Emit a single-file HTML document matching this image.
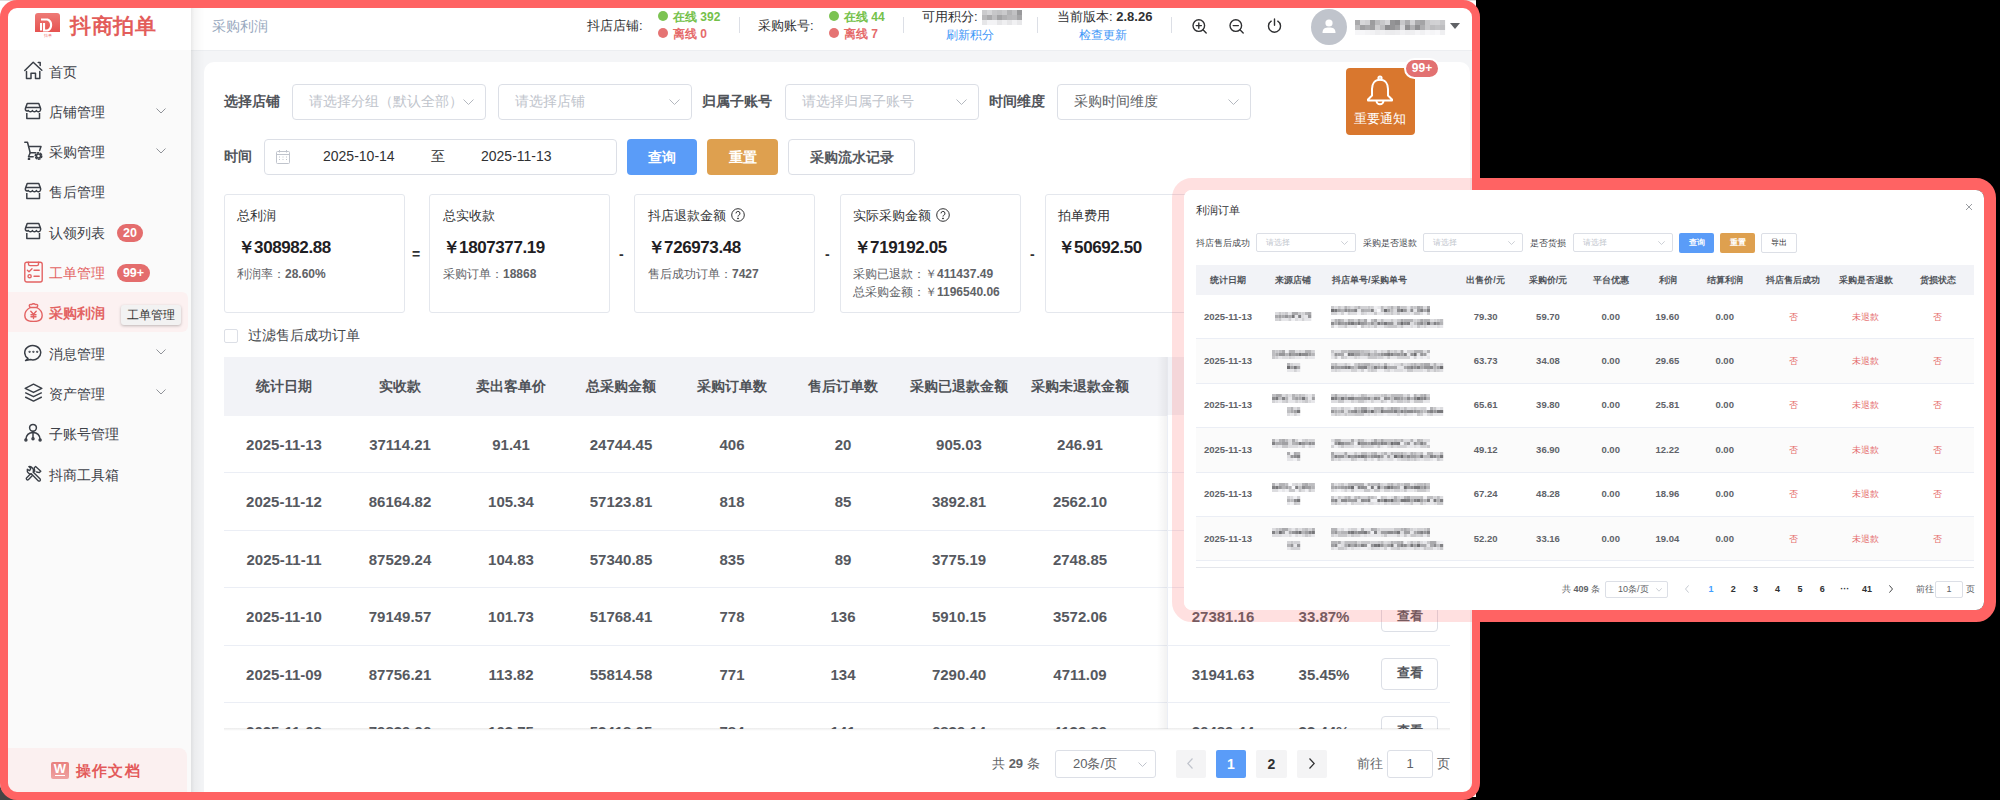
<!DOCTYPE html>
<html><head><meta charset="utf-8">
<style>
*{box-sizing:border-box;margin:0;padding:0}
html,body{width:2000px;height:800px;overflow:hidden;background:#000}
body{position:relative;font-family:"Liberation Sans",sans-serif;color:#606266}
.a{position:absolute;white-space:nowrap}
#under{position:absolute;left:0;top:0;width:1476px;height:797px;background:#fff;border-bottom-left-radius:14px;border-top:1px solid #ddd}
#app{position:absolute;left:0;top:0;width:1480px;height:800px;clip-path:inset(8px round 9px);background:#f4f5f7}
#frame{position:absolute;left:0;top:0;width:1480px;height:800px;border:8px solid #ff6363;border-radius:17px}
/* sidebar */
#side{position:absolute;left:8px;top:8px;width:183px;height:784px;background:#fafafa}
#logo{position:absolute;left:8px;top:8px;width:183px;height:42px;background:#fff}
#sideshadow{position:absolute;left:191px;top:8px;width:14px;height:784px;background:linear-gradient(to right,rgba(0,0,0,0.085),rgba(0,0,0,0.035) 25%,rgba(0,0,0,0.01) 70%,rgba(0,0,0,0))}
.mi{position:absolute;left:49px;font-size:14px;color:#3d4148;line-height:20px}
.ic{position:absolute;left:24px;width:19px;height:19px}
.chev{position:absolute;left:156px;width:10px;height:6px}
.badge{position:absolute;height:18px;border-radius:9px;background:#e46d6d;color:#fff;font-size:12.5px;font-weight:bold;line-height:18px;text-align:center}
/* header */
#hdr{position:absolute;left:191px;top:8px;width:1281px;height:43px;background:#fff;border-bottom:1px solid #eceef1}
.sep{position:absolute;width:1px;background:#dcdfe6}

.card{position:absolute;left:204px;top:62px;width:1266px;height:760px;background:#fff;border-radius:10px}
.lbl{position:absolute;font-size:14px;line-height:20px;color:#51545a;font-weight:bold}
.sel{position:absolute;height:36px;border:1px solid #dcdfe6;border-radius:4px;background:#fff}
.ph{position:absolute;font-size:14px;line-height:20px;color:#c0c4cc}
.btn{position:absolute;height:36px;border-radius:4px;font-size:14px;line-height:36px;text-align:center;font-weight:bold}
.sc{position:absolute;top:194px;width:181px;height:119px;border:1px solid #e4e7ed;border-radius:3px;background:#fff}
.st{position:absolute;font-size:13px;line-height:18px;color:#303133}
.sv{position:absolute;font-size:17px;line-height:20px;color:#1f2023;font-weight:bold;letter-spacing:-0.4px}
.ss{position:absolute;font-size:12px;line-height:16px;color:#606266}
.op{position:absolute;top:244px;font-size:14px;line-height:20px;color:#303133;font-weight:bold}

.th{position:absolute;top:376px;width:130px;margin-left:-65px;text-align:center;font-size:14px;line-height:20px;color:#4f5257;font-weight:bold}
.td{position:absolute;width:130px;margin-left:-65px;text-align:center;font-size:15px;line-height:20px;color:#56595f;font-weight:bold}
.rl{position:absolute;left:224px;width:1226px;height:1px;background:#ebeef5}
.vb{position:absolute;left:1381px;width:57px;height:31.5px;border:1px solid #dcdfe6;border-radius:4px;background:#fff;font-size:12.5px;line-height:29px;text-align:center;color:#55585e;font-weight:bold}
.pg{position:absolute;top:750px;width:30px;height:28px;border-radius:2px;background:#f4f4f5;font-size:14px;line-height:28px;text-align:center;color:#303133;font-weight:bold}

.ov{position:absolute;left:1172px;top:178px;width:824px;height:444px;border:12px solid #ff6363;border-radius:20px}
.ovl{font-size:9px;line-height:12px;color:#45484e}
.osel{position:absolute;top:233px;height:19px;border:1px solid #dcdfe6;border-radius:2px;background:#fff}
.oph{position:absolute;top:237px;font-size:8px;line-height:11px;color:#c0c4cc}
.oth{position:absolute;top:274px;width:80px;margin-left:-40px;text-align:center;font-size:9px;line-height:12px;color:#50535a;font-weight:bold}
.otd{position:absolute;width:80px;margin-left:-40px;text-align:center;font-size:9.5px;line-height:12px;color:#606369;font-weight:bold}
.ored{position:absolute;width:80px;margin-left:-40px;text-align:center;font-size:9px;line-height:12px;color:#e56b6b}
.orl{position:absolute;left:1196px;width:778px;height:1px;background:#ebeef5}
.opn{position:absolute;top:583px;width:20px;margin-left:-10px;text-align:center;font-size:9px;line-height:13px;color:#303133;font-weight:bold}
</style></head><body>
<div class="a" style="left:0;top:760px;width:40px;height:40px;background:#444"></div>
<div id="under"></div>
<div id="app">
  <div id="hdr"></div>
  <div class="a" style="left:212px;top:16px;font-size:14px;line-height:20px;color:#97a8be">采购利润</div>
  <div class="a" style="left:587px;top:16px;font-size:13px;line-height:20px;color:#303133">抖店店铺:</div>
  <div class="a" style="left:658px;top:11px;width:10px;height:10px;border-radius:5px;background:#7cc352"></div>
  <div class="a" style="left:673px;top:8px;font-size:12px;line-height:18px;color:#74c14a;font-weight:bold">在线 392</div>
  <div class="a" style="left:658px;top:28px;width:10px;height:10px;border-radius:5px;background:#e57373"></div>
  <div class="a" style="left:673px;top:25px;font-size:12px;line-height:18px;color:#e56b6b;font-weight:bold">离线 0</div>
  <div class="sep" style="left:739px;top:17px;height:16px"></div>
  <div class="a" style="left:758px;top:16px;font-size:13px;line-height:20px;color:#303133">采购账号:</div>
  <div class="a" style="left:829px;top:11px;width:10px;height:10px;border-radius:5px;background:#7cc352"></div>
  <div class="a" style="left:844px;top:8px;font-size:12px;line-height:18px;color:#74c14a;font-weight:bold">在线 44</div>
  <div class="a" style="left:829px;top:28px;width:10px;height:10px;border-radius:5px;background:#e57373"></div>
  <div class="a" style="left:844px;top:25px;font-size:12px;line-height:18px;color:#e56b6b;font-weight:bold">离线 7</div>
  <div class="sep" style="left:903px;top:17px;height:16px"></div>
  <div class="a" style="left:922px;top:7px;font-size:13px;line-height:20px;color:#303133">可用积分:</div>
  <svg class="a" style="left:982px;top:10px" width="40" height="15"><rect x="0" y="0" width="5.1" height="5" fill="rgb(203,203,205)"/><rect x="5" y="0" width="5.1" height="5" fill="rgb(214,214,216)"/><rect x="10" y="0" width="5.1" height="5" fill="rgb(199,199,201)"/><rect x="15" y="0" width="5.1" height="5" fill="rgb(194,194,196)"/><rect x="20" y="0" width="5.1" height="5" fill="rgb(202,202,204)"/><rect x="25" y="0" width="5.1" height="5" fill="rgb(179,179,181)"/><rect x="30" y="0" width="5.1" height="5" fill="rgb(193,193,195)"/><rect x="35" y="0" width="5.1" height="5" fill="rgb(153,153,155)"/><rect x="0" y="5" width="5.1" height="5" fill="rgb(185,185,187)"/><rect x="5" y="5" width="5.1" height="5" fill="rgb(170,170,172)"/><rect x="10" y="5" width="5.1" height="5" fill="rgb(191,191,193)"/><rect x="15" y="5" width="5.1" height="5" fill="rgb(163,163,165)"/><rect x="20" y="5" width="5.1" height="5" fill="rgb(177,177,179)"/><rect x="25" y="5" width="5.1" height="5" fill="rgb(184,184,186)"/><rect x="30" y="5" width="5.1" height="5" fill="rgb(186,186,188)"/><rect x="35" y="5" width="5.1" height="5" fill="rgb(165,165,167)"/><rect x="0" y="10" width="5.1" height="5" fill="rgb(230,230,232)"/><rect x="5" y="10" width="5.1" height="5" fill="rgb(243,243,245)"/><rect x="10" y="10" width="5.1" height="5" fill="rgb(243,243,245)"/><rect x="15" y="10" width="5.1" height="5" fill="rgb(230,230,232)"/><rect x="20" y="10" width="5.1" height="5" fill="rgb(239,239,241)"/><rect x="25" y="10" width="5.1" height="5" fill="rgb(230,230,232)"/><rect x="30" y="10" width="5.1" height="5" fill="rgb(241,241,243)"/><rect x="35" y="10" width="5.1" height="5" fill="rgb(232,232,234)"/></svg>
  <div class="a" style="left:946px;top:26px;font-size:12px;line-height:18px;color:#3f97f7">刷新积分</div>
  <div class="sep" style="left:1037px;top:17px;height:16px"></div>
  <div class="a" style="left:1057px;top:7px;font-size:13px;line-height:20px;color:#303133">当前版本: <b>2.8.26</b></div>
  <div class="a" style="left:1079px;top:25.5px;font-size:12px;line-height:18px;color:#3f97f7">检查更新</div>
  <div class="sep" style="left:1171px;top:17px;height:16px"></div>
  <svg class="a" style="left:1192px;top:19px" width="16" height="15" viewBox="0 0 16 15" fill="none" stroke="#303133" stroke-width="1.4" stroke-linecap="round"><circle cx="6.8" cy="6.6" r="5.8"/><path d="M11 10.8L14.2 14M4.2 6.6H9.4M6.8 4V9.2"/></svg>
  <svg class="a" style="left:1229px;top:19px" width="16" height="15" viewBox="0 0 16 15" fill="none" stroke="#303133" stroke-width="1.4" stroke-linecap="round"><circle cx="6.8" cy="6.6" r="5.8"/><path d="M11 10.8L14.2 14M4.2 6.6H9.4"/></svg>
  <svg class="a" style="left:1267px;top:18px" width="15" height="15" viewBox="0 0 15 15" fill="none" stroke="#303133" stroke-width="1.4" stroke-linecap="round"><path d="M4.2 3.2A6 6 0 1 0 10.8 3.2"/><path d="M7.5 1V7.2"/></svg>
  <div class="a" style="left:1311px;top:9px;width:36px;height:36px;border-radius:18px;background:#c0c4cc"></div>
  <svg class="a" style="left:1320px;top:17px" width="18" height="18" viewBox="0 0 18 18" fill="#fff"><circle cx="9" cy="6" r="3.6"/><path d="M2.5 16C2.5 11.5 5 10.4 9 10.4C13 10.4 15.5 11.5 15.5 16Z"/></svg>
  <svg class="a" style="left:1355px;top:20px" width="91" height="15"><rect x="0" y="0" width="5.1" height="5" fill="rgb(170,170,172)"/><rect x="5" y="0" width="5.1" height="5" fill="rgb(215,215,217)"/><rect x="10" y="0" width="5.1" height="5" fill="rgb(209,209,211)"/><rect x="15" y="0" width="5.1" height="5" fill="rgb(156,156,158)"/><rect x="20" y="0" width="5.1" height="5" fill="rgb(187,187,189)"/><rect x="25" y="0" width="5.1" height="5" fill="rgb(200,200,202)"/><rect x="30" y="0" width="5.1" height="5" fill="rgb(214,214,216)"/><rect x="35" y="0" width="5.1" height="5" fill="rgb(148,148,150)"/><rect x="40" y="0" width="5.1" height="5" fill="rgb(141,141,143)"/><rect x="45" y="0" width="5.1" height="5" fill="rgb(200,200,202)"/><rect x="50" y="0" width="5.1" height="5" fill="rgb(173,173,175)"/><rect x="55" y="0" width="5.1" height="5" fill="rgb(210,210,212)"/><rect x="60" y="0" width="5.1" height="5" fill="rgb(169,169,171)"/><rect x="65" y="0" width="5.1" height="5" fill="rgb(164,164,166)"/><rect x="70" y="0" width="5.1" height="5" fill="rgb(200,200,202)"/><rect x="75" y="0" width="5.1" height="5" fill="rgb(209,209,211)"/><rect x="80" y="0" width="5.1" height="5" fill="rgb(210,210,212)"/><rect x="85" y="0" width="5.1" height="5" fill="rgb(200,200,202)"/><rect x="0" y="5" width="5.1" height="5" fill="rgb(190,190,192)"/><rect x="5" y="5" width="5.1" height="5" fill="rgb(159,159,161)"/><rect x="10" y="5" width="5.1" height="5" fill="rgb(169,169,171)"/><rect x="15" y="5" width="5.1" height="5" fill="rgb(159,159,161)"/><rect x="20" y="5" width="5.1" height="5" fill="rgb(206,206,208)"/><rect x="25" y="5" width="5.1" height="5" fill="rgb(189,189,191)"/><rect x="30" y="5" width="5.1" height="5" fill="rgb(141,141,143)"/><rect x="35" y="5" width="5.1" height="5" fill="rgb(148,148,150)"/><rect x="40" y="5" width="5.1" height="5" fill="rgb(160,160,162)"/><rect x="45" y="5" width="5.1" height="5" fill="rgb(215,215,217)"/><rect x="50" y="5" width="5.1" height="5" fill="rgb(145,145,147)"/><rect x="55" y="5" width="5.1" height="5" fill="rgb(178,178,180)"/><rect x="60" y="5" width="5.1" height="5" fill="rgb(143,143,145)"/><rect x="65" y="5" width="5.1" height="5" fill="rgb(174,174,176)"/><rect x="70" y="5" width="5.1" height="5" fill="rgb(200,200,202)"/><rect x="75" y="5" width="5.1" height="5" fill="rgb(189,189,191)"/><rect x="80" y="5" width="5.1" height="5" fill="rgb(194,194,196)"/><rect x="85" y="5" width="5.1" height="5" fill="rgb(190,190,192)"/><rect x="0" y="10" width="5.1" height="5" fill="rgb(246,246,248)"/><rect x="5" y="10" width="5.1" height="5" fill="rgb(247,247,249)"/><rect x="10" y="10" width="5.1" height="5" fill="rgb(244,244,246)"/><rect x="15" y="10" width="5.1" height="5" fill="rgb(242,242,244)"/><rect x="20" y="10" width="5.1" height="5" fill="rgb(237,237,239)"/><rect x="25" y="10" width="5.1" height="5" fill="rgb(240,240,242)"/><rect x="30" y="10" width="5.1" height="5" fill="rgb(236,236,238)"/><rect x="35" y="10" width="5.1" height="5" fill="rgb(235,235,237)"/><rect x="40" y="10" width="5.1" height="5" fill="rgb(237,237,239)"/><rect x="45" y="10" width="5.1" height="5" fill="rgb(242,242,244)"/><rect x="50" y="10" width="5.1" height="5" fill="rgb(238,238,240)"/><rect x="55" y="10" width="5.1" height="5" fill="rgb(239,239,241)"/><rect x="60" y="10" width="5.1" height="5" fill="rgb(245,245,247)"/><rect x="65" y="10" width="5.1" height="5" fill="rgb(241,241,243)"/><rect x="70" y="10" width="5.1" height="5" fill="rgb(247,247,249)"/><rect x="75" y="10" width="5.1" height="5" fill="rgb(245,245,247)"/><rect x="80" y="10" width="5.1" height="5" fill="rgb(248,248,250)"/><rect x="85" y="10" width="5.1" height="5" fill="rgb(239,239,241)"/></svg>
  <svg class="a" style="left:1450px;top:23px" width="10" height="6" viewBox="0 0 10 6"><path d="M0 0H10L5 6Z" fill="#606266"/></svg>

  
  <div class="card"></div>
  <div class="lbl" style="left:224px;top:91px">选择店铺</div>
  <div class="sel" style="left:292px;top:84px;width:194px"></div>
  <div class="ph" style="left:309px;top:91px">请选择分组（默认全部）</div>
  <svg class="a" style="left:463px;top:99px" width="11" height="6" viewBox="0 0 11 6" fill="none" stroke="#b4b8bf" stroke-width="1"><path d="M0.5 0.5L5.5 5.5L10.5 0.5"/></svg>
  <div class="sel" style="left:498px;top:84px;width:194px"></div>
  <div class="ph" style="left:515px;top:91px">请选择店铺</div>
  <svg class="a" style="left:669px;top:99px" width="11" height="6" viewBox="0 0 11 6" fill="none" stroke="#b4b8bf" stroke-width="1"><path d="M0.5 0.5L5.5 5.5L10.5 0.5"/></svg>
  <div class="lbl" style="left:702px;top:91px">归属子账号</div>
  <div class="sel" style="left:785px;top:84px;width:194px"></div>
  <div class="ph" style="left:802px;top:91px">请选择归属子账号</div>
  <svg class="a" style="left:956px;top:99px" width="11" height="6" viewBox="0 0 11 6" fill="none" stroke="#b4b8bf" stroke-width="1"><path d="M0.5 0.5L5.5 5.5L10.5 0.5"/></svg>
  <div class="lbl" style="left:989px;top:91px">时间维度</div>
  <div class="sel" style="left:1057px;top:84px;width:194px"></div>
  <div class="ph" style="left:1074px;top:91px;color:#606266">采购时间维度</div>
  <svg class="a" style="left:1228px;top:99px" width="11" height="6" viewBox="0 0 11 6" fill="none" stroke="#b4b8bf" stroke-width="1"><path d="M0.5 0.5L5.5 5.5L10.5 0.5"/></svg>
  <div class="lbl" style="left:224px;top:146px">时间</div>
  <div class="sel" style="left:264px;top:139px;width:353px"></div>
  <svg class="a" style="left:276px;top:150px" width="14" height="14" viewBox="0 0 14 14" fill="none" stroke="#c0c4cc" stroke-width="1"><rect x="0.5" y="1.5" width="13" height="12" rx="1"/><path d="M0.5 4.5H13.5M3.5 0V2.5M10.5 0V2.5"/><path d="M3 7H4M6.5 7H7.5M10 7H11M3 9.5H4M6.5 9.5H7.5M10 9.5H11"/></svg>
  <div class="a" style="left:323px;top:146px;font-size:14px;line-height:20px;color:#303133">2025-10-14</div>
  <div class="a" style="left:431px;top:146px;font-size:14px;line-height:20px;color:#303133">至</div>
  <div class="a" style="left:481px;top:146px;font-size:14px;line-height:20px;color:#303133">2025-11-13</div>
  <div class="btn" style="left:627px;top:139px;width:70px;background:#5a9cf8;color:#fff">查询</div>
  <div class="btn" style="left:707px;top:139px;width:71px;background:#dea04f;color:#fff">重置</div>
  <div class="btn" style="left:788px;top:139px;width:127px;border:1px solid #dcdfe6;background:#fff;color:#55585e;line-height:34px">采购流水记录</div>
  <!-- notify -->
  <div class="a" style="left:1346px;top:68px;width:69px;height:67px;border-radius:4px;background:#d9772e"></div>
  <svg class="a" style="left:1366px;top:75px" width="28" height="31" viewBox="0 0 28 31" fill="none" stroke="#fff" stroke-width="2" stroke-linejoin="round"><circle cx="14" cy="3" r="1.6"/><path d="M14 4.8C8.5 4.8 6 9 6 14V20.5L2 24.5V25.5H26V24.5L22 20.5V14C22 9 19.5 4.8 14 4.8Z"/><path d="M10.5 25.8A3.5 3.5 0 0 0 17.5 25.8"/></svg>
  <div class="a" style="left:1354px;top:109px;font-size:13px;line-height:20px;color:#fff">重要通知</div>
  <div class="a" style="left:1404px;top:58px;width:36px;height:21px;border-radius:11px;background:#e27171;border:2px solid #fff;color:#fff;font-size:12px;font-weight:bold;line-height:17px;text-align:center">99+</div>

  <div class="sc" style="left:224px"></div>
  <div class="st" style="left:237px;top:207px">总利润</div>
  <div class="sv" style="left:237.5px;top:238px">￥308982.88</div>
  <div class="ss" style="left:237px;top:266px">利润率：<b>28.60%</b></div>
  <div class="op" style="left:412px">=</div>
  <div class="sc" style="left:429px"></div>
  <div class="st" style="left:443px;top:207px">总实收款</div>
  <div class="sv" style="left:442.5px;top:238px">￥1807377.19</div>
  <div class="ss" style="left:443px;top:266px">采购订单：<b>18868</b></div>
  <div class="op" style="left:619px">-</div>
  <div class="sc" style="left:634px"></div>
  <div class="st" style="left:648px;top:207px">抖店退款金额</div>
  <svg class="a" style="left:731px;top:208px" width="14" height="14" viewBox="0 0 14 14" fill="none" stroke="#303133" stroke-width="1"><circle cx="7" cy="7" r="6.3"/><path d="M5 5.4A2 2 0 1 1 7.6 7.3C7.1 7.6 7 8 7 8.6"/><circle cx="7" cy="10.4" r="0.5" fill="#303133"/></svg>
  <div class="sv" style="left:647.5px;top:238px">￥726973.48</div>
  <div class="ss" style="left:648px;top:266px">售后成功订单：<b>7427</b></div>
  <div class="op" style="left:825px">-</div>
  <div class="sc" style="left:840px"></div>
  <div class="st" style="left:853px;top:207px">实际采购金额</div>
  <svg class="a" style="left:936px;top:208px" width="14" height="14" viewBox="0 0 14 14" fill="none" stroke="#303133" stroke-width="1"><circle cx="7" cy="7" r="6.3"/><path d="M5 5.4A2 2 0 1 1 7.6 7.3C7.1 7.6 7 8 7 8.6"/><circle cx="7" cy="10.4" r="0.5" fill="#303133"/></svg>
  <div class="sv" style="left:853.5px;top:238px">￥719192.05</div>
  <div class="ss" style="left:853px;top:266px">采购已退款：￥<b>411437.49</b></div>
  <div class="ss" style="left:853px;top:284px">总采购金额：￥<b>1196540.06</b></div>
  <div class="op" style="left:1030px">-</div>
  <div class="sc" style="left:1045px"></div>
  <div class="st" style="left:1058px;top:207px">拍单费用</div>
  <div class="sv" style="left:1057.5px;top:238px">￥50692.50</div>
  <div class="a" style="left:224px;top:329px;width:14px;height:14px;border:1px solid #dcdfe6;border-radius:2px;background:#fff"></div>
  <div class="a" style="left:248px;top:325px;font-size:14px;line-height:20px;color:#45484d">过滤售后成功订单</div>


  <div class="a" style="left:224px;top:357px;width:1226px;height:58.5px;background:#f2f3f7"></div>
  <div class="a" style="left:1157px;top:357px;width:10px;height:58px;background:linear-gradient(to right,rgba(0,0,0,0),rgba(0,0,0,0.05))"></div>
  <div class="a" style="left:1167px;top:357px;width:1px;height:58px;background:#e6e8ee"></div>
  <div class="th" style="left:284px">统计日期</div>
  <div class="th" style="left:400px">实收款</div>
  <div class="th" style="left:511px">卖出客单价</div>
  <div class="th" style="left:621px">总采购金额</div>
  <div class="th" style="left:732px">采购订单数</div>
  <div class="th" style="left:843px">售后订单数</div>
  <div class="th" style="left:959px">采购已退款金额</div>
  <div class="th" style="left:1080px">采购未退款金额</div>
  <div class="a" style="left:224px;top:415px;width:1246px;height:314px;overflow:hidden">
    <div class="td" style="left:60px;top:19.5px">2025-11-13</div>
    <div class="td" style="left:176px;top:19.5px">37114.21</div>
    <div class="td" style="left:287px;top:19.5px">91.41</div>
    <div class="td" style="left:397px;top:19.5px">24744.45</div>
    <div class="td" style="left:508px;top:19.5px">406</div>
    <div class="td" style="left:619px;top:19.5px">20</div>
    <div class="td" style="left:735px;top:19.5px">905.03</div>
    <div class="td" style="left:856px;top:19.5px">246.91</div>
    <div class="rl" style="left:0;top:57.0px"></div>
    <div class="td" style="left:60px;top:77.0px">2025-11-12</div>
    <div class="td" style="left:176px;top:77.0px">86164.82</div>
    <div class="td" style="left:287px;top:77.0px">105.34</div>
    <div class="td" style="left:397px;top:77.0px">57123.81</div>
    <div class="td" style="left:508px;top:77.0px">818</div>
    <div class="td" style="left:619px;top:77.0px">85</div>
    <div class="td" style="left:735px;top:77.0px">3892.81</div>
    <div class="td" style="left:856px;top:77.0px">2562.10</div>
    <div class="rl" style="left:0;top:114.5px"></div>
    <div class="td" style="left:60px;top:134.5px">2025-11-11</div>
    <div class="td" style="left:176px;top:134.5px">87529.24</div>
    <div class="td" style="left:287px;top:134.5px">104.83</div>
    <div class="td" style="left:397px;top:134.5px">57340.85</div>
    <div class="td" style="left:508px;top:134.5px">835</div>
    <div class="td" style="left:619px;top:134.5px">89</div>
    <div class="td" style="left:735px;top:134.5px">3775.19</div>
    <div class="td" style="left:856px;top:134.5px">2748.85</div>
    <div class="rl" style="left:0;top:172.0px"></div>
    <div class="td" style="left:60px;top:192.0px">2025-11-10</div>
    <div class="td" style="left:176px;top:192.0px">79149.57</div>
    <div class="td" style="left:287px;top:192.0px">101.73</div>
    <div class="td" style="left:397px;top:192.0px">51768.41</div>
    <div class="td" style="left:508px;top:192.0px">778</div>
    <div class="td" style="left:619px;top:192.0px">136</div>
    <div class="td" style="left:735px;top:192.0px">5910.15</div>
    <div class="td" style="left:856px;top:192.0px">3572.06</div>
    <div class="rl" style="left:0;top:229.5px"></div>
    <div class="td" style="left:60px;top:249.5px">2025-11-09</div>
    <div class="td" style="left:176px;top:249.5px">87756.21</div>
    <div class="td" style="left:287px;top:249.5px">113.82</div>
    <div class="td" style="left:397px;top:249.5px">55814.58</div>
    <div class="td" style="left:508px;top:249.5px">771</div>
    <div class="td" style="left:619px;top:249.5px">134</div>
    <div class="td" style="left:735px;top:249.5px">7290.40</div>
    <div class="td" style="left:856px;top:249.5px">4711.09</div>
    <div class="rl" style="left:0;top:287.0px"></div>
    <div class="td" style="left:60px;top:307.0px">2025-11-08</div>
    <div class="td" style="left:176px;top:307.0px">79839.96</div>
    <div class="td" style="left:287px;top:307.0px">103.75</div>
    <div class="td" style="left:397px;top:307.0px">52418.05</div>
    <div class="td" style="left:508px;top:307.0px">784</div>
    <div class="td" style="left:619px;top:307.0px">141</div>
    <div class="td" style="left:735px;top:307.0px">6839.14</div>
    <div class="td" style="left:856px;top:307.0px">4139.89</div>
    <div class="rl" style="left:0;top:344.5px"></div>
    <div class="a" style="left:933px;top:0;width:10px;height:314px;background:linear-gradient(to right,rgba(0,0,0,0),rgba(0,0,0,0.05))"></div>
    <div class="a" style="left:943px;top:0;width:283px;height:314px;background:#fff;border-left:1px solid #ebeef5"></div>
    <div class="td" style="left:999px;top:19.5px">24396.06</div>
    <div class="td" style="left:1100px;top:19.5px">32.42%</div>
    <div class="vb" style="left:1157px;top:13.0px">查看</div>
    <div class="rl" style="left:943px;width:283px;top:57.0px"></div>
    <div class="td" style="left:999px;top:77.0px">28148.91</div>
    <div class="td" style="left:1100px;top:77.0px">32.67%</div>
    <div class="vb" style="left:1157px;top:70.5px">查看</div>
    <div class="rl" style="left:943px;width:283px;top:114.5px"></div>
    <div class="td" style="left:999px;top:134.5px">29067.78</div>
    <div class="td" style="left:1100px;top:134.5px">33.21%</div>
    <div class="vb" style="left:1157px;top:128.0px">查看</div>
    <div class="rl" style="left:943px;width:283px;top:172.0px"></div>
    <div class="td" style="left:999px;top:192.0px">27381.16</div>
    <div class="td" style="left:1100px;top:192.0px">33.87%</div>
    <div class="vb" style="left:1157px;top:185.5px">查看</div>
    <div class="rl" style="left:943px;width:283px;top:229.5px"></div>
    <div class="td" style="left:999px;top:249.5px">31941.63</div>
    <div class="td" style="left:1100px;top:249.5px">35.45%</div>
    <div class="vb" style="left:1157px;top:243.0px">查看</div>
    <div class="rl" style="left:943px;width:283px;top:287.0px"></div>
    <div class="td" style="left:999px;top:307.0px">26489.44</div>
    <div class="td" style="left:1100px;top:307.0px">33.44%</div>
    <div class="vb" style="left:1157px;top:300.5px">查看</div>
    <div class="rl" style="left:943px;width:283px;top:344.5px"></div>
  </div>
  <div class="a" style="left:224px;top:728px;width:1226px;height:3px;background:linear-gradient(rgba(0,0,0,0.08),rgba(0,0,0,0))"></div>

  <div class="a" style="left:992px;top:754px;font-size:13px;line-height:20px;color:#606266">共 <b>29</b> 条</div>
  <div class="sel" style="left:1055px;top:750px;width:101px;height:28px;border-radius:3px"></div>
  <div class="a" style="left:1073px;top:754px;font-size:13px;line-height:20px;color:#606266">20条/页</div>
  <svg class="a" style="left:1138px;top:762px" width="9" height="5" viewBox="0 0 9 5" fill="none" stroke="#c0c4cc" stroke-width="1"><path d="M0.5 0.5L4.5 4.5L8.5 0.5"/></svg>
  <div class="pg" style="left:1176px"></div>
  <svg class="a" style="left:1187px;top:758px" width="6" height="11" viewBox="0 0 6 11" fill="none" stroke="#c0c4cc" stroke-width="1.2"><path d="M5.5 0.5L0.8 5.5L5.5 10.5"/></svg>
  <div class="pg" style="left:1216px;background:#5a9cf8;color:#fff">1</div>
  <div class="pg" style="left:1256px;width:31px">2</div>
  <div class="pg" style="left:1297px"></div>
  <svg class="a" style="left:1309px;top:758px" width="6" height="11" viewBox="0 0 6 11" fill="none" stroke="#303133" stroke-width="1.2"><path d="M0.5 0.5L5.2 5.5L0.5 10.5"/></svg>
  <div class="a" style="left:1357px;top:754px;font-size:13px;line-height:20px;color:#606266">前往</div>
  <div class="sel" style="left:1387px;top:750px;width:46px;height:28px;border-radius:3px"></div>
  <div class="a" style="left:1387px;top:754px;width:46px;text-align:center;font-size:13px;line-height:20px;color:#606266">1</div>
  <div class="a" style="left:1437px;top:754px;font-size:13px;line-height:20px;color:#606266">页</div>

  <div id="side"></div>
  <div id="logo"></div>
  
  <!-- logo -->
  <svg class="a" style="left:34px;top:12px" width="27" height="26" viewBox="0 0 27 26">
    <defs><linearGradient id="lg" x1="0" y1="0" x2="0" y2="1"><stop offset="0" stop-color="#ee7a76"/><stop offset="1" stop-color="#e65350"/></linearGradient></defs>
    <path d="M4 1H23a3 3 0 0 1 3 3V20H1V4a3 3 0 0 1 3-3z" fill="url(#lg)"/>
    <path d="M7 7.5h6.5a6 6 0 0 1 0 11H10V11" fill="none" stroke="#fff" stroke-width="2.2"/>
    <path d="M7 11v7.5" stroke="#fff" stroke-width="2"/>
    <text x="13.5" y="25" font-size="4" fill="#e66" text-anchor="middle">抖单</text>
  </svg>
  <div class="a" style="left:70px;top:13px;font-size:21px;line-height:26px;color:#e35d5b;font-weight:bold;letter-spacing:0.6px">抖商拍单</div>
  <!-- menu -->
  <svg class="ic" style="top:61px" viewBox="0 0 19 19" fill="none" stroke="#3a3f47" stroke-width="1.5" stroke-linecap="round" stroke-linejoin="round">
    <path d="M0.8 9.5L9.2 1.2L17.8 9.3"/><path d="M14.2 1.6h2v2.8"/><path d="M2.5 10.4V17.6H7V12.2H11.5V17.6H15.8V10.4"/></svg>
  <div class="mi" style="top:61.5px">首页</div>
  <svg class="ic" style="top:102px" viewBox="0 0 19 19" fill="none" stroke="#3a3f47" stroke-width="1.5" stroke-linejoin="round">
    <path d="M3.2 1.5H14.8L16.6 6.5V7.8A2.2 2.2 0 0 1 12.4 8.5A2.2 2.2 0 0 1 8.4 8.5A2.2 2.2 0 0 1 4.4 8.5A2.2 2.2 0 0 1 1.4 7.8V6.5Z"/><path d="M1.5 5.5H16.5"/><path d="M2.8 11V16.5H15.5V11"/></svg>
  <div class="mi" style="top:101.8px">店铺管理</div>
  <svg class="chev" style="top:108px" viewBox="0 0 10 6" fill="none" stroke="#909399" stroke-width="1"><path d="M0.5 0.5L5 5L9.5 0.5"/></svg>
  <svg class="ic" style="top:141px" viewBox="0 0 19 19" fill="none" stroke="#3a3f47" stroke-width="1.5" stroke-linecap="round" stroke-linejoin="round">
    <path d="M0.8 1.2H3.5L6.2 11.8H11.5"/><path d="M4.8 5.5H17L15.6 9.5"/><path d="M6.2 11.8L4.5 15.8H9.2"/><circle cx="5" cy="18" r="0.6" fill="#3a3f47"/>
    <circle cx="14.5" cy="15" r="2"/><circle cx="14.5" cy="15" r="3.2" stroke-width="1.6" stroke-dasharray="1.4 1.95"/></svg>
  <div class="mi" style="top:142.1px">采购管理</div>
  <svg class="chev" style="top:148px" viewBox="0 0 10 6" fill="none" stroke="#909399" stroke-width="1"><path d="M0.5 0.5L5 5L9.5 0.5"/></svg>
  <svg class="ic" style="top:182px" viewBox="0 0 19 19" fill="none" stroke="#3a3f47" stroke-width="1.5" stroke-linejoin="round">
    <path d="M3.2 1.5H14.8L16.6 6.5V7.8A2.2 2.2 0 0 1 12.4 8.5A2.2 2.2 0 0 1 8.4 8.5A2.2 2.2 0 0 1 4.4 8.5A2.2 2.2 0 0 1 1.4 7.8V6.5Z"/><path d="M1.5 5.5H16.5"/><path d="M2.8 11V16.5H15.5V11"/></svg>
  <div class="mi" style="top:182.4px">售后管理</div>
  <svg class="ic" style="top:222px" viewBox="0 0 19 19" fill="none" stroke="#3a3f47" stroke-width="1.5" stroke-linejoin="round">
    <path d="M3.2 1.5H14.8L16.6 6.5V7.8A2.2 2.2 0 0 1 12.4 8.5A2.2 2.2 0 0 1 8.4 8.5A2.2 2.2 0 0 1 4.4 8.5A2.2 2.2 0 0 1 1.4 7.8V6.5Z"/><path d="M1.5 5.5H16.5"/><path d="M2.8 11V16.5H15.5V11"/></svg>
  <div class="mi" style="top:222.7px">认领列表</div>
  <div class="badge" style="left:117px;top:224px;width:26px">20</div>
  <svg class="ic" style="top:261px;height:22px" viewBox="0 0 19 22" fill="none" stroke="#e36363" stroke-width="1.4" stroke-linecap="round" stroke-linejoin="round">
    <rect x="0.8" y="1.2" width="17.4" height="19.8" rx="2"/><path d="M4.5 1.2V3.2A1.5 1.5 0 0 0 6 4.6H13A1.5 1.5 0 0 0 14.5 3.2V1.2"/>
    <path d="M3.4 9.3L5 10.8L8 7.8"/><path d="M10 9.3H15.2"/><circle cx="5.6" cy="15.2" r="1.6"/><path d="M10 15.2H15.2"/></svg>
  <div class="mi" style="top:263.0px;color:#e36363">工单管理</div>
  <div class="badge" style="left:117px;top:264px;width:33px">99+</div>
  <div class="a" style="left:8px;top:292px;width:180px;height:40px;background:#fcf1f1;border-radius:0 6px 6px 0"></div>
  <svg class="ic" style="top:303px" viewBox="0 0 19 19" fill="none" stroke="#e36363" stroke-width="1.4" stroke-linecap="round" stroke-linejoin="round">
    <path d="M6.2 4.5C4.5 2.8 5.5 0.8 7.4 1.6C8.5 0.6 10.5 0.6 11.6 1.6C13.5 0.8 14.5 2.8 12.8 4.5"/>
    <path d="M6.2 4.5C2.5 6.5 0.8 9.5 0.8 12.5C0.8 16.5 4.5 18.5 9.5 18.5C14.5 18.5 18.2 16.5 18.2 12.5C18.2 9.5 16.5 6.5 12.8 4.5Z"/>
    <path d="M6.8 8.2L9.5 11.2L12.2 8.2M9.5 11.2V15.5M7 11.8H12M7 13.8H12"/></svg>
  <div class="mi" style="top:303.3px;color:#e36363;font-weight:bold">采购利润</div>
  <div class="a" style="left:121px;top:305px;width:60px;height:20px;background:#f2f2f2;border-radius:3px;box-shadow:0 1px 3px rgba(0,0,0,0.25);font-size:12px;line-height:20px;color:#333;text-align:center">工单管理</div>
  <svg class="ic" style="top:343px" viewBox="0 0 19 19" fill="none" stroke="#3a3f47" stroke-width="1.5" stroke-linecap="round" stroke-linejoin="round">
    <path d="M4 15.5A8 7.2 0 1 1 6.5 16.6L1.6 17.6Z"/><circle cx="5.6" cy="8.8" r="0.4" fill="#3a3f47"/><circle cx="9.4" cy="8.8" r="0.4" fill="#3a3f47"/><circle cx="13.2" cy="8.8" r="0.4" fill="#3a3f47"/></svg>
  <div class="mi" style="top:343.6px">消息管理</div>
  <svg class="chev" style="top:349px" viewBox="0 0 10 6" fill="none" stroke="#909399" stroke-width="1"><path d="M0.5 0.5L5 5L9.5 0.5"/></svg>
  <svg class="ic" style="top:383px;height:20px" viewBox="0 0 19 20" fill="none" stroke="#3a3f47" stroke-width="1.5" stroke-linejoin="round">
    <path d="M9.5 1.2L17.8 5.3L9.5 9.4L1.2 5.3Z"/><path d="M1.2 9.6L9.5 13.7L17.8 9.6"/><path d="M1.2 14L9.5 18.1L17.8 14"/></svg>
  <div class="mi" style="top:383.9px">资产管理</div>
  <svg class="chev" style="top:389px" viewBox="0 0 10 6" fill="none" stroke="#909399" stroke-width="1"><path d="M0.5 0.5L5 5L9.5 0.5"/></svg>
  <svg class="ic" style="top:423px" viewBox="0 0 19 19" fill="none" stroke="#3a3f47" stroke-width="1.5" stroke-linecap="round">
    <circle cx="9" cy="4.8" r="3.4"/><path d="M9 8.2V14.8"/><path d="M1.8 16.8C2.2 12.2 5 9.6 9 9.6C13 9.6 15.8 12.2 16.2 16.8"/><circle cx="1.9" cy="17" r="1"/><circle cx="9" cy="15.8" r="1"/><circle cx="16.1" cy="17" r="1"/></svg>
  <div class="mi" style="top:424.2px">子账号管理</div>
  <svg class="ic" style="top:464px" viewBox="0 0 19 19" fill="none" stroke="#3a3f47" stroke-width="1.35" stroke-linejoin="round" stroke-linecap="round">
    <path d="M9.3 8.2L16.2 15.1A1.3 1.3 0 0 1 14.4 16.9L7.5 10"/><path d="M9.3 8.2C9.8 6.4 9.4 4.8 8 3.6C7 2.7 5.8 2.4 4.8 2.6L6.8 4.6L5.6 6.6L3.3 5.3C3 6.7 3.4 8 4.4 8.9C5.2 9.7 6.3 10.1 7.5 10"/>
    <path d="M8.2 11.8L4.3 15.7A1.3 1.3 0 0 1 2.5 13.9L6.4 10"/><path d="M10.8 7.6L10.2 3.9L11.6 2.4L16.8 7.2L15.4 8.6L12.6 8"/></svg>
  <div class="mi" style="top:464.5px">抖商工具箱</div>
  <!-- docs -->
  <div class="a" style="left:8px;top:748px;width:179px;height:50px;background:#fbf0f0;border-radius:0 8px 0 0"></div>
  <div class="a" style="left:51px;top:762px;width:18px;height:17px;border-radius:2px;background:linear-gradient(#e8807e,#efa3a2)"></div>
  <div class="a" style="left:51px;top:761px;width:18px;font-size:13px;line-height:16px;color:#fff;text-align:center;font-weight:bold">W</div>
  <div class="a" style="left:55px;top:775px;width:10px;height:1px;background:#fff"></div>
  <div class="a" style="left:76px;top:761px;font-size:15px;line-height:20px;color:#e35a5a;font-weight:bold;letter-spacing:1.2px">操作文档</div>

  <div id="sideshadow"></div>
</div>
<div id="frame"></div>

<!-- overlay -->
<div class="ov" style="clip-path:inset(0 0 0 300px)"></div>
<div class="ov" style="border-color:rgba(255,99,99,0.2);clip-path:inset(0 524px 0 0)"></div>
<div class="a" style="left:1184px;top:190px;width:800px;height:420px;background:#fff;border-radius:8px"></div>
<div class="a" style="left:1196px;top:202px;font-size:11px;line-height:16px;color:#303133">利润订单</div>
<svg class="a" style="left:1965px;top:203px" width="8" height="8" viewBox="0 0 8 8" stroke="#909399" stroke-width="0.9"><path d="M1 1L7 7M7 1L1 7"/></svg>
<div class="a ovl" style="left:1196px;top:237px">抖店售后成功</div>
<div class="osel" style="left:1256px;width:100px"></div>
<div class="oph" style="left:1266px">请选择</div>
<div class="a ovl" style="left:1363px;top:237px">采购是否退款</div>
<div class="osel" style="left:1423px;width:100px"></div>
<div class="oph" style="left:1433px">请选择</div>
<div class="a ovl" style="left:1530px;top:237px">是否货损</div>
<div class="osel" style="left:1573px;width:100px"></div>
<div class="oph" style="left:1583px">请选择</div>
<svg class="a" style="left:1341px;top:241px" width="7" height="4" viewBox="0 0 7 4" fill="none" stroke="#c0c4cc" stroke-width="0.8"><path d="M0.3 0.3L3.5 3.5L6.7 0.3"/></svg>
<svg class="a" style="left:1508px;top:241px" width="7" height="4" viewBox="0 0 7 4" fill="none" stroke="#c0c4cc" stroke-width="0.8"><path d="M0.3 0.3L3.5 3.5L6.7 0.3"/></svg>
<svg class="a" style="left:1658px;top:241px" width="7" height="4" viewBox="0 0 7 4" fill="none" stroke="#c0c4cc" stroke-width="0.8"><path d="M0.3 0.3L3.5 3.5L6.7 0.3"/></svg>
<div class="a" style="left:1679px;top:233px;width:35px;height:20px;border-radius:2px;background:#5a9cf8;color:#fff;font-size:8px;line-height:20px;text-align:center;font-weight:bold">查询</div>
<div class="a" style="left:1720px;top:233px;width:35px;height:20px;border-radius:2px;background:#dea04f;color:#fff;font-size:8px;line-height:20px;text-align:center;font-weight:bold">重置</div>
<div class="a" style="left:1761px;top:233px;width:36px;height:20px;border-radius:2px;border:1px solid #dcdfe6;background:#fff;color:#303133;font-size:8px;line-height:18px;text-align:center">导出</div>
<div class="a" style="left:1196px;top:265px;width:778px;height:30px;background:#f2f3f7"></div>
<div class="oth" style="left:1228.0px">统计日期</div>
<div class="oth" style="left:1293.0px">来源店铺</div>
<div class="oth" style="left:1485.5px">出售价/元</div>
<div class="oth" style="left:1548.0px">采购价/元</div>
<div class="oth" style="left:1611.0px">平台优惠</div>
<div class="oth" style="left:1667.5px">利润</div>
<div class="oth" style="left:1725.0px">结算利润</div>
<div class="oth" style="left:1793.0px">抖店售后成功</div>
<div class="oth" style="left:1865.5px">采购是否退款</div>
<div class="oth" style="left:1937.7px">货损状态</div>
<div class="a" style="left:1332px;top:274px;font-size:9px;line-height:12px;color:#50535a;font-weight:bold">抖店单号/采购单号</div>
<div class="a" style="left:1196px;top:339.4px;width:778px;height:44.4px;background:#fbfbfb"></div>
<div class="a" style="left:1196px;top:428.2px;width:778px;height:44.4px;background:#fbfbfb"></div>
<div class="a" style="left:1196px;top:517.0px;width:778px;height:44.4px;background:#fbfbfb"></div>
<div class="otd" style="left:1228px;top:310.5px">2025-11-13</div>
<div class="otd" style="left:1485.6px;top:310.5px">79.30</div>
<div class="otd" style="left:1548.0px;top:310.5px">59.70</div>
<div class="otd" style="left:1610.7px;top:310.5px">0.00</div>
<div class="otd" style="left:1667.4px;top:310.5px">19.60</div>
<div class="otd" style="left:1724.7px;top:310.5px">0.00</div>
<div class="ored" style="left:1793.0px;top:310.5px">否</div>
<div class="ored" style="left:1865.5px;top:310.5px">未退款</div>
<div class="ored" style="left:1937.7px;top:310.5px">否</div>
<div class="orl" style="top:338.4px"></div>
<div class="otd" style="left:1228px;top:354.9px">2025-11-13</div>
<div class="otd" style="left:1485.6px;top:354.9px">63.73</div>
<div class="otd" style="left:1548.0px;top:354.9px">34.08</div>
<div class="otd" style="left:1610.7px;top:354.9px">0.00</div>
<div class="otd" style="left:1667.4px;top:354.9px">29.65</div>
<div class="otd" style="left:1724.7px;top:354.9px">0.00</div>
<div class="ored" style="left:1793.0px;top:354.9px">否</div>
<div class="ored" style="left:1865.5px;top:354.9px">未退款</div>
<div class="ored" style="left:1937.7px;top:354.9px">否</div>
<div class="orl" style="top:382.8px"></div>
<div class="otd" style="left:1228px;top:399.3px">2025-11-13</div>
<div class="otd" style="left:1485.6px;top:399.3px">65.61</div>
<div class="otd" style="left:1548.0px;top:399.3px">39.80</div>
<div class="otd" style="left:1610.7px;top:399.3px">0.00</div>
<div class="otd" style="left:1667.4px;top:399.3px">25.81</div>
<div class="otd" style="left:1724.7px;top:399.3px">0.00</div>
<div class="ored" style="left:1793.0px;top:399.3px">否</div>
<div class="ored" style="left:1865.5px;top:399.3px">未退款</div>
<div class="ored" style="left:1937.7px;top:399.3px">否</div>
<div class="orl" style="top:427.2px"></div>
<div class="otd" style="left:1228px;top:443.7px">2025-11-13</div>
<div class="otd" style="left:1485.6px;top:443.7px">49.12</div>
<div class="otd" style="left:1548.0px;top:443.7px">36.90</div>
<div class="otd" style="left:1610.7px;top:443.7px">0.00</div>
<div class="otd" style="left:1667.4px;top:443.7px">12.22</div>
<div class="otd" style="left:1724.7px;top:443.7px">0.00</div>
<div class="ored" style="left:1793.0px;top:443.7px">否</div>
<div class="ored" style="left:1865.5px;top:443.7px">未退款</div>
<div class="ored" style="left:1937.7px;top:443.7px">否</div>
<div class="orl" style="top:471.6px"></div>
<div class="otd" style="left:1228px;top:488.1px">2025-11-13</div>
<div class="otd" style="left:1485.6px;top:488.1px">67.24</div>
<div class="otd" style="left:1548.0px;top:488.1px">48.28</div>
<div class="otd" style="left:1610.7px;top:488.1px">0.00</div>
<div class="otd" style="left:1667.4px;top:488.1px">18.96</div>
<div class="otd" style="left:1724.7px;top:488.1px">0.00</div>
<div class="ored" style="left:1793.0px;top:488.1px">否</div>
<div class="ored" style="left:1865.5px;top:488.1px">未退款</div>
<div class="ored" style="left:1937.7px;top:488.1px">否</div>
<div class="orl" style="top:516.0px"></div>
<div class="otd" style="left:1228px;top:532.5px">2025-11-13</div>
<div class="otd" style="left:1485.6px;top:532.5px">52.20</div>
<div class="otd" style="left:1548.0px;top:532.5px">33.16</div>
<div class="otd" style="left:1610.7px;top:532.5px">0.00</div>
<div class="otd" style="left:1667.4px;top:532.5px">19.04</div>
<div class="otd" style="left:1724.7px;top:532.5px">0.00</div>
<div class="ored" style="left:1793.0px;top:532.5px">否</div>
<div class="ored" style="left:1865.5px;top:532.5px">未退款</div>
<div class="ored" style="left:1937.7px;top:532.5px">否</div>
<div class="orl" style="top:560.4px"></div>
<svg class="a" style="left:0;top:0;filter:blur(0.45px)" width="2000" height="800"><path fill="rgb(110,110,113)" d="M1331.0 309h3.3v3h-3.3zM1383.8 309h3.3v3h-3.3zM1400.3 309h3.3v3h-3.3zM1400.3 322h3.3v3h-3.3zM1426.7 322h3.3v3h-3.3zM1413.5 353h3.3v3h-3.3zM1439.9 366h3.3v3h-3.3zM1287.0 366h3.3v3h-3.3zM1416.8 397h3.3v3h-3.3zM1370.6 410h3.3v3h-3.3zM1390.4 442h3.3v3h-3.3zM1393.7 455h3.3v3h-3.3zM1400.3 455h3.3v3h-3.3zM1350.8 486h3.3v3h-3.3zM1377.2 486h3.3v3h-3.3zM1387.1 486h3.3v3h-3.3zM1403.6 486h3.3v3h-3.3zM1383.8 499h3.3v3h-3.3zM1390.4 499h3.3v3h-3.3zM1377.2 544h3.3v3h-3.3zM1416.8 544h3.3v3h-3.3zM1278.6 531h3.3v3h-3.3zM1298.4 531h3.3v3h-3.3z"/><path fill="rgb(120,120,123)" d="M1334.3 309h3.3v3h-3.3zM1350.8 322h3.3v3h-3.3zM1357.4 322h3.3v3h-3.3zM1377.2 322h3.3v3h-3.3zM1383.8 322h3.3v3h-3.3zM1291.5 315h3.3v3h-3.3zM1347.5 353h3.3v3h-3.3zM1387.1 353h3.3v3h-3.3zM1347.5 366h3.3v3h-3.3zM1383.8 366h3.3v3h-3.3zM1298.4 353h3.3v3h-3.3zM1293.6 366h3.3v3h-3.3zM1331.0 397h3.3v3h-3.3zM1340.9 397h3.3v3h-3.3zM1364.0 410h3.3v3h-3.3zM1380.5 410h3.3v3h-3.3zM1436.6 410h3.3v3h-3.3zM1439.9 410h3.3v3h-3.3zM1275.3 397h3.3v3h-3.3zM1301.7 397h3.3v3h-3.3zM1296.9 410h3.3v3h-3.3zM1337.6 442h3.3v3h-3.3zM1357.4 442h3.3v3h-3.3zM1397.0 442h3.3v3h-3.3zM1360.7 455h3.3v3h-3.3zM1420.1 455h3.3v3h-3.3zM1439.9 455h3.3v3h-3.3zM1298.4 442h3.3v3h-3.3zM1370.6 486h3.3v3h-3.3zM1413.5 486h3.3v3h-3.3zM1416.8 486h3.3v3h-3.3zM1377.2 499h3.3v3h-3.3zM1400.3 499h3.3v3h-3.3zM1403.6 499h3.3v3h-3.3zM1416.8 499h3.3v3h-3.3zM1433.3 499h3.3v3h-3.3zM1275.3 486h3.3v3h-3.3zM1296.9 499h3.3v3h-3.3zM1350.8 531h3.3v3h-3.3zM1364.0 531h3.3v3h-3.3zM1397.0 531h3.3v3h-3.3zM1373.9 544h3.3v3h-3.3zM1390.4 544h3.3v3h-3.3zM1410.2 544h3.3v3h-3.3zM1311.6 531h3.3v3h-3.3z"/><path fill="rgb(130,130,133)" d="M1354.1 309h3.3v3h-3.3zM1370.6 309h3.3v3h-3.3zM1420.1 309h3.3v3h-3.3zM1426.7 309h3.3v3h-3.3zM1347.5 322h3.3v3h-3.3zM1406.9 322h3.3v3h-3.3zM1433.3 322h3.3v3h-3.3zM1298.1 315h3.3v3h-3.3zM1350.8 353h3.3v3h-3.3zM1390.4 353h3.3v3h-3.3zM1403.6 353h3.3v3h-3.3zM1344.2 366h3.3v3h-3.3zM1364.0 366h3.3v3h-3.3zM1373.9 366h3.3v3h-3.3zM1410.2 366h3.3v3h-3.3zM1416.8 366h3.3v3h-3.3zM1334.3 397h3.3v3h-3.3zM1347.5 397h3.3v3h-3.3zM1350.8 397h3.3v3h-3.3zM1423.4 397h3.3v3h-3.3zM1354.1 410h3.3v3h-3.3zM1393.7 410h3.3v3h-3.3zM1400.3 410h3.3v3h-3.3zM1430.0 410h3.3v3h-3.3zM1281.9 397h3.3v3h-3.3zM1370.6 442h3.3v3h-3.3zM1380.5 442h3.3v3h-3.3zM1393.7 442h3.3v3h-3.3zM1420.1 442h3.3v3h-3.3zM1334.3 455h3.3v3h-3.3zM1347.5 455h3.3v3h-3.3zM1357.4 455h3.3v3h-3.3zM1377.2 455h3.3v3h-3.3zM1430.0 455h3.3v3h-3.3zM1272.0 442h3.3v3h-3.3zM1296.9 455h3.3v3h-3.3zM1357.4 486h3.3v3h-3.3zM1390.4 486h3.3v3h-3.3zM1334.3 499h3.3v3h-3.3zM1367.3 499h3.3v3h-3.3zM1406.9 499h3.3v3h-3.3zM1413.5 499h3.3v3h-3.3zM1426.7 499h3.3v3h-3.3zM1439.9 499h3.3v3h-3.3zM1272.0 486h3.3v3h-3.3zM1295.1 486h3.3v3h-3.3zM1347.5 531h3.3v3h-3.3zM1373.9 531h3.3v3h-3.3zM1420.1 531h3.3v3h-3.3zM1426.7 531h3.3v3h-3.3zM1347.5 544h3.3v3h-3.3zM1360.7 544h3.3v3h-3.3zM1400.3 544h3.3v3h-3.3zM1439.9 544h3.3v3h-3.3zM1272.0 531h3.3v3h-3.3zM1295.1 531h3.3v3h-3.3zM1308.3 531h3.3v3h-3.3z"/><path fill="rgb(140,140,143)" d="M1344.2 309h3.3v3h-3.3zM1397.0 309h3.3v3h-3.3zM1410.2 309h3.3v3h-3.3zM1331.0 322h3.3v3h-3.3zM1337.6 322h3.3v3h-3.3zM1403.6 322h3.3v3h-3.3zM1420.1 322h3.3v3h-3.3zM1383.8 353h3.3v3h-3.3zM1331.0 366h3.3v3h-3.3zM1357.4 366h3.3v3h-3.3zM1360.7 366h3.3v3h-3.3zM1430.0 366h3.3v3h-3.3zM1288.5 353h3.3v3h-3.3zM1301.7 353h3.3v3h-3.3zM1305.0 353h3.3v3h-3.3zM1367.3 397h3.3v3h-3.3zM1373.9 397h3.3v3h-3.3zM1383.8 397h3.3v3h-3.3zM1393.7 397h3.3v3h-3.3zM1406.9 397h3.3v3h-3.3zM1413.5 397h3.3v3h-3.3zM1420.1 397h3.3v3h-3.3zM1360.7 410h3.3v3h-3.3zM1406.9 410h3.3v3h-3.3zM1410.2 410h3.3v3h-3.3zM1272.0 397h3.3v3h-3.3zM1340.9 442h3.3v3h-3.3zM1373.9 442h3.3v3h-3.3zM1383.8 442h3.3v3h-3.3zM1354.1 455h3.3v3h-3.3zM1364.0 455h3.3v3h-3.3zM1373.9 455h3.3v3h-3.3zM1406.9 455h3.3v3h-3.3zM1433.3 455h3.3v3h-3.3zM1308.3 442h3.3v3h-3.3zM1293.6 455h3.3v3h-3.3zM1347.5 486h3.3v3h-3.3zM1360.7 486h3.3v3h-3.3zM1410.2 486h3.3v3h-3.3zM1423.4 486h3.3v3h-3.3zM1340.9 499h3.3v3h-3.3zM1344.2 499h3.3v3h-3.3zM1360.7 499h3.3v3h-3.3zM1387.1 499h3.3v3h-3.3zM1301.7 486h3.3v3h-3.3zM1293.6 499h3.3v3h-3.3zM1357.4 531h3.3v3h-3.3zM1360.7 531h3.3v3h-3.3zM1387.1 531h3.3v3h-3.3zM1390.4 531h3.3v3h-3.3zM1334.3 544h3.3v3h-3.3zM1354.1 544h3.3v3h-3.3zM1403.6 544h3.3v3h-3.3zM1433.3 544h3.3v3h-3.3z"/><path fill="rgb(150,150,153)" d="M1347.5 309h3.3v3h-3.3zM1403.6 309h3.3v3h-3.3zM1344.2 322h3.3v3h-3.3zM1354.1 322h3.3v3h-3.3zM1360.7 322h3.3v3h-3.3zM1370.6 322h3.3v3h-3.3zM1380.5 322h3.3v3h-3.3zM1387.1 322h3.3v3h-3.3zM1390.4 322h3.3v3h-3.3zM1436.6 322h3.3v3h-3.3zM1284.9 315h3.3v3h-3.3zM1308.0 315h3.3v3h-3.3zM1334.3 353h3.3v3h-3.3zM1367.3 353h3.3v3h-3.3zM1380.5 353h3.3v3h-3.3zM1397.0 353h3.3v3h-3.3zM1410.2 353h3.3v3h-3.3zM1420.1 353h3.3v3h-3.3zM1340.9 366h3.3v3h-3.3zM1406.9 366h3.3v3h-3.3zM1413.5 366h3.3v3h-3.3zM1423.4 366h3.3v3h-3.3zM1426.7 366h3.3v3h-3.3zM1278.6 353h3.3v3h-3.3zM1281.9 353h3.3v3h-3.3zM1295.1 353h3.3v3h-3.3zM1364.0 397h3.3v3h-3.3zM1377.2 397h3.3v3h-3.3zM1387.1 397h3.3v3h-3.3zM1397.0 397h3.3v3h-3.3zM1331.0 410h3.3v3h-3.3zM1350.8 410h3.3v3h-3.3zM1383.8 410h3.3v3h-3.3zM1387.1 410h3.3v3h-3.3zM1390.4 410h3.3v3h-3.3zM1403.6 410h3.3v3h-3.3zM1413.5 410h3.3v3h-3.3zM1426.7 410h3.3v3h-3.3zM1433.3 410h3.3v3h-3.3zM1334.3 442h3.3v3h-3.3zM1360.7 442h3.3v3h-3.3zM1364.0 442h3.3v3h-3.3zM1377.2 442h3.3v3h-3.3zM1406.9 442h3.3v3h-3.3zM1413.5 442h3.3v3h-3.3zM1337.6 455h3.3v3h-3.3zM1340.9 455h3.3v3h-3.3zM1370.6 455h3.3v3h-3.3zM1397.0 455h3.3v3h-3.3zM1301.7 442h3.3v3h-3.3zM1311.6 442h3.3v3h-3.3zM1290.3 455h3.3v3h-3.3zM1344.2 486h3.3v3h-3.3zM1364.0 486h3.3v3h-3.3zM1383.8 486h3.3v3h-3.3zM1331.0 499h3.3v3h-3.3zM1354.1 499h3.3v3h-3.3zM1364.0 499h3.3v3h-3.3zM1380.5 499h3.3v3h-3.3zM1278.6 486h3.3v3h-3.3zM1334.3 531h3.3v3h-3.3zM1354.1 531h3.3v3h-3.3zM1393.7 531h3.3v3h-3.3zM1416.8 531h3.3v3h-3.3zM1423.4 531h3.3v3h-3.3zM1364.0 544h3.3v3h-3.3zM1370.6 544h3.3v3h-3.3zM1380.5 544h3.3v3h-3.3zM1291.8 531h3.3v3h-3.3zM1290.3 544h3.3v3h-3.3zM1296.9 544h3.3v3h-3.3z"/><path fill="rgb(160,160,163)" d="M1337.6 309h3.3v3h-3.3zM1350.8 309h3.3v3h-3.3zM1387.1 309h3.3v3h-3.3zM1416.8 309h3.3v3h-3.3zM1340.9 322h3.3v3h-3.3zM1364.0 322h3.3v3h-3.3zM1397.0 322h3.3v3h-3.3zM1416.8 322h3.3v3h-3.3zM1278.3 315h3.3v3h-3.3zM1337.6 353h3.3v3h-3.3zM1354.1 353h3.3v3h-3.3zM1357.4 353h3.3v3h-3.3zM1393.7 353h3.3v3h-3.3zM1400.3 353h3.3v3h-3.3zM1423.4 353h3.3v3h-3.3zM1334.3 366h3.3v3h-3.3zM1337.6 366h3.3v3h-3.3zM1377.2 366h3.3v3h-3.3zM1436.6 366h3.3v3h-3.3zM1291.8 353h3.3v3h-3.3zM1308.3 353h3.3v3h-3.3zM1290.3 366h3.3v3h-3.3zM1344.2 397h3.3v3h-3.3zM1354.1 397h3.3v3h-3.3zM1357.4 397h3.3v3h-3.3zM1360.7 397h3.3v3h-3.3zM1400.3 397h3.3v3h-3.3zM1340.9 410h3.3v3h-3.3zM1367.3 410h3.3v3h-3.3zM1416.8 410h3.3v3h-3.3zM1295.1 397h3.3v3h-3.3zM1311.6 397h3.3v3h-3.3zM1293.6 410h3.3v3h-3.3zM1344.2 442h3.3v3h-3.3zM1347.5 442h3.3v3h-3.3zM1367.3 442h3.3v3h-3.3zM1423.4 442h3.3v3h-3.3zM1350.8 455h3.3v3h-3.3zM1380.5 455h3.3v3h-3.3zM1387.1 455h3.3v3h-3.3zM1410.2 455h3.3v3h-3.3zM1413.5 455h3.3v3h-3.3zM1281.9 442h3.3v3h-3.3zM1285.2 442h3.3v3h-3.3zM1334.3 486h3.3v3h-3.3zM1340.9 486h3.3v3h-3.3zM1393.7 486h3.3v3h-3.3zM1406.9 486h3.3v3h-3.3zM1420.1 486h3.3v3h-3.3zM1347.5 499h3.3v3h-3.3zM1350.8 499h3.3v3h-3.3zM1420.1 499h3.3v3h-3.3zM1285.2 486h3.3v3h-3.3zM1305.0 486h3.3v3h-3.3zM1308.3 486h3.3v3h-3.3zM1380.5 531h3.3v3h-3.3zM1383.8 531h3.3v3h-3.3zM1403.6 531h3.3v3h-3.3zM1406.9 531h3.3v3h-3.3zM1331.0 544h3.3v3h-3.3zM1387.1 544h3.3v3h-3.3zM1397.0 544h3.3v3h-3.3zM1413.5 544h3.3v3h-3.3zM1281.9 531h3.3v3h-3.3zM1305.0 531h3.3v3h-3.3z"/><path fill="rgb(170,170,173)" d="M1397.0 306h3.3v3h-3.3zM1416.8 306h3.3v3h-3.3zM1426.7 306h3.3v3h-3.3zM1360.7 309h3.3v3h-3.3zM1423.4 309h3.3v3h-3.3zM1337.6 319h3.3v3h-3.3zM1357.4 319h3.3v3h-3.3zM1364.0 319h3.3v3h-3.3zM1373.9 319h3.3v3h-3.3zM1400.3 319h3.3v3h-3.3zM1420.1 319h3.3v3h-3.3zM1334.3 322h3.3v3h-3.3zM1423.4 322h3.3v3h-3.3zM1291.5 312h3.3v3h-3.3zM1294.8 312h3.3v3h-3.3zM1308.0 312h3.3v3h-3.3zM1275.0 315h3.3v3h-3.3zM1281.6 315h3.3v3h-3.3zM1288.2 315h3.3v3h-3.3zM1400.3 350h3.3v3h-3.3zM1340.9 353h3.3v3h-3.3zM1377.2 353h3.3v3h-3.3zM1423.4 363h3.3v3h-3.3zM1426.7 363h3.3v3h-3.3zM1350.8 366h3.3v3h-3.3zM1380.5 366h3.3v3h-3.3zM1387.1 366h3.3v3h-3.3zM1390.4 366h3.3v3h-3.3zM1393.7 366h3.3v3h-3.3zM1403.6 366h3.3v3h-3.3zM1420.1 366h3.3v3h-3.3zM1281.9 350h3.3v3h-3.3zM1275.3 353h3.3v3h-3.3zM1296.9 366h3.3v3h-3.3zM1334.3 394h3.3v3h-3.3zM1423.4 394h3.3v3h-3.3zM1337.6 397h3.3v3h-3.3zM1360.7 407h3.3v3h-3.3zM1364.0 407h3.3v3h-3.3zM1380.5 407h3.3v3h-3.3zM1390.4 407h3.3v3h-3.3zM1334.3 410h3.3v3h-3.3zM1347.5 410h3.3v3h-3.3zM1357.4 410h3.3v3h-3.3zM1397.0 410h3.3v3h-3.3zM1275.3 394h3.3v3h-3.3zM1278.6 394h3.3v3h-3.3zM1298.4 397h3.3v3h-3.3zM1290.3 410h3.3v3h-3.3zM1350.8 439h3.3v3h-3.3zM1373.9 439h3.3v3h-3.3zM1380.5 439h3.3v3h-3.3zM1331.0 452h3.3v3h-3.3zM1344.2 452h3.3v3h-3.3zM1367.3 455h3.3v3h-3.3zM1403.6 455h3.3v3h-3.3zM1436.6 455h3.3v3h-3.3zM1281.9 439h3.3v3h-3.3zM1291.8 439h3.3v3h-3.3zM1275.3 442h3.3v3h-3.3zM1278.6 442h3.3v3h-3.3zM1295.1 442h3.3v3h-3.3zM1305.0 442h3.3v3h-3.3zM1287.0 452h3.3v3h-3.3zM1293.6 452h3.3v3h-3.3zM1377.2 483h3.3v3h-3.3zM1331.0 486h3.3v3h-3.3zM1337.6 486h3.3v3h-3.3zM1397.0 486h3.3v3h-3.3zM1406.9 496h3.3v3h-3.3zM1393.7 499h3.3v3h-3.3zM1410.2 499h3.3v3h-3.3zM1305.0 483h3.3v3h-3.3zM1370.6 528h3.3v3h-3.3zM1403.6 528h3.3v3h-3.3zM1331.0 531h3.3v3h-3.3zM1367.3 531h3.3v3h-3.3zM1413.5 531h3.3v3h-3.3zM1337.6 541h3.3v3h-3.3zM1400.3 541h3.3v3h-3.3zM1430.0 541h3.3v3h-3.3zM1433.3 541h3.3v3h-3.3zM1344.2 544h3.3v3h-3.3zM1350.8 544h3.3v3h-3.3zM1357.4 544h3.3v3h-3.3zM1420.1 544h3.3v3h-3.3zM1423.4 544h3.3v3h-3.3zM1430.0 544h3.3v3h-3.3zM1281.9 528h3.3v3h-3.3zM1285.2 528h3.3v3h-3.3zM1288.5 531h3.3v3h-3.3z"/><path fill="rgb(180,180,183)" d="M1344.2 306h3.3v3h-3.3zM1357.4 306h3.3v3h-3.3zM1390.4 306h3.3v3h-3.3zM1420.1 306h3.3v3h-3.3zM1340.9 309h3.3v3h-3.3zM1364.0 309h3.3v3h-3.3zM1367.3 309h3.3v3h-3.3zM1334.3 319h3.3v3h-3.3zM1347.5 319h3.3v3h-3.3zM1403.6 319h3.3v3h-3.3zM1406.9 319h3.3v3h-3.3zM1410.2 319h3.3v3h-3.3zM1423.4 319h3.3v3h-3.3zM1426.7 319h3.3v3h-3.3zM1367.3 322h3.3v3h-3.3zM1430.0 322h3.3v3h-3.3zM1439.9 322h3.3v3h-3.3zM1304.7 312h3.3v3h-3.3zM1347.5 350h3.3v3h-3.3zM1350.8 350h3.3v3h-3.3zM1354.1 350h3.3v3h-3.3zM1357.4 350h3.3v3h-3.3zM1387.1 350h3.3v3h-3.3zM1413.5 350h3.3v3h-3.3zM1416.8 350h3.3v3h-3.3zM1420.1 350h3.3v3h-3.3zM1426.7 350h3.3v3h-3.3zM1364.0 353h3.3v3h-3.3zM1373.9 353h3.3v3h-3.3zM1357.4 363h3.3v3h-3.3zM1364.0 363h3.3v3h-3.3zM1367.3 363h3.3v3h-3.3zM1383.8 363h3.3v3h-3.3zM1413.5 363h3.3v3h-3.3zM1420.1 363h3.3v3h-3.3zM1433.3 363h3.3v3h-3.3zM1370.6 366h3.3v3h-3.3zM1433.3 366h3.3v3h-3.3zM1288.5 350h3.3v3h-3.3zM1291.8 350h3.3v3h-3.3zM1305.0 350h3.3v3h-3.3zM1308.3 350h3.3v3h-3.3zM1285.2 353h3.3v3h-3.3zM1311.6 353h3.3v3h-3.3zM1287.0 363h3.3v3h-3.3zM1413.5 394h3.3v3h-3.3zM1420.1 394h3.3v3h-3.3zM1403.6 397h3.3v3h-3.3zM1410.2 397h3.3v3h-3.3zM1426.7 397h3.3v3h-3.3zM1393.7 407h3.3v3h-3.3zM1430.0 407h3.3v3h-3.3zM1337.6 410h3.3v3h-3.3zM1373.9 410h3.3v3h-3.3zM1420.1 410h3.3v3h-3.3zM1291.8 394h3.3v3h-3.3zM1285.2 397h3.3v3h-3.3zM1291.8 397h3.3v3h-3.3zM1290.3 407h3.3v3h-3.3zM1334.3 439h3.3v3h-3.3zM1337.6 439h3.3v3h-3.3zM1357.4 439h3.3v3h-3.3zM1400.3 439h3.3v3h-3.3zM1410.2 439h3.3v3h-3.3zM1416.8 439h3.3v3h-3.3zM1387.1 442h3.3v3h-3.3zM1403.6 442h3.3v3h-3.3zM1416.8 442h3.3v3h-3.3zM1373.9 452h3.3v3h-3.3zM1383.8 452h3.3v3h-3.3zM1390.4 452h3.3v3h-3.3zM1400.3 452h3.3v3h-3.3zM1410.2 452h3.3v3h-3.3zM1426.7 452h3.3v3h-3.3zM1430.0 452h3.3v3h-3.3zM1331.0 455h3.3v3h-3.3zM1416.8 455h3.3v3h-3.3zM1272.0 439h3.3v3h-3.3zM1278.6 439h3.3v3h-3.3zM1291.8 442h3.3v3h-3.3zM1296.9 452h3.3v3h-3.3zM1354.1 483h3.3v3h-3.3zM1357.4 483h3.3v3h-3.3zM1360.7 483h3.3v3h-3.3zM1367.3 483h3.3v3h-3.3zM1390.4 483h3.3v3h-3.3zM1403.6 483h3.3v3h-3.3zM1406.9 483h3.3v3h-3.3zM1423.4 483h3.3v3h-3.3zM1426.7 486h3.3v3h-3.3zM1347.5 496h3.3v3h-3.3zM1357.4 496h3.3v3h-3.3zM1367.3 496h3.3v3h-3.3zM1393.7 496h3.3v3h-3.3zM1403.6 496h3.3v3h-3.3zM1423.4 499h3.3v3h-3.3zM1436.6 499h3.3v3h-3.3zM1272.0 483h3.3v3h-3.3zM1278.6 483h3.3v3h-3.3zM1281.9 483h3.3v3h-3.3zM1301.7 483h3.3v3h-3.3zM1281.9 486h3.3v3h-3.3zM1288.5 486h3.3v3h-3.3zM1311.6 486h3.3v3h-3.3zM1287.0 499h3.3v3h-3.3zM1331.0 528h3.3v3h-3.3zM1334.3 528h3.3v3h-3.3zM1360.7 528h3.3v3h-3.3zM1373.9 528h3.3v3h-3.3zM1400.3 528h3.3v3h-3.3zM1426.7 528h3.3v3h-3.3zM1340.9 531h3.3v3h-3.3zM1344.2 531h3.3v3h-3.3zM1331.0 541h3.3v3h-3.3zM1334.3 541h3.3v3h-3.3zM1354.1 541h3.3v3h-3.3zM1390.4 541h3.3v3h-3.3zM1397.0 541h3.3v3h-3.3zM1311.6 528h3.3v3h-3.3zM1275.3 531h3.3v3h-3.3zM1301.7 531h3.3v3h-3.3zM1287.0 544h3.3v3h-3.3z"/><path fill="rgb(190,190,193)" d="M1380.5 306h3.3v3h-3.3zM1410.2 306h3.3v3h-3.3zM1380.5 309h3.3v3h-3.3zM1390.4 309h3.3v3h-3.3zM1340.9 319h3.3v3h-3.3zM1350.8 319h3.3v3h-3.3zM1370.6 319h3.3v3h-3.3zM1380.5 319h3.3v3h-3.3zM1439.9 319h3.3v3h-3.3zM1373.9 322h3.3v3h-3.3zM1413.5 322h3.3v3h-3.3zM1340.9 350h3.3v3h-3.3zM1344.2 350h3.3v3h-3.3zM1360.7 350h3.3v3h-3.3zM1360.7 353h3.3v3h-3.3zM1370.6 353h3.3v3h-3.3zM1334.3 363h3.3v3h-3.3zM1360.7 363h3.3v3h-3.3zM1400.3 363h3.3v3h-3.3zM1410.2 363h3.3v3h-3.3zM1354.1 366h3.3v3h-3.3zM1367.3 366h3.3v3h-3.3zM1272.0 350h3.3v3h-3.3zM1278.6 350h3.3v3h-3.3zM1272.0 353h3.3v3h-3.3zM1360.7 394h3.3v3h-3.3zM1383.8 394h3.3v3h-3.3zM1390.4 394h3.3v3h-3.3zM1393.7 394h3.3v3h-3.3zM1397.0 394h3.3v3h-3.3zM1400.3 394h3.3v3h-3.3zM1370.6 397h3.3v3h-3.3zM1390.4 397h3.3v3h-3.3zM1354.1 407h3.3v3h-3.3zM1373.9 407h3.3v3h-3.3zM1377.2 407h3.3v3h-3.3zM1397.0 407h3.3v3h-3.3zM1403.6 407h3.3v3h-3.3zM1377.2 410h3.3v3h-3.3zM1423.4 410h3.3v3h-3.3zM1272.0 394h3.3v3h-3.3zM1298.4 394h3.3v3h-3.3zM1278.6 397h3.3v3h-3.3zM1305.0 397h3.3v3h-3.3zM1287.0 410h3.3v3h-3.3zM1360.7 439h3.3v3h-3.3zM1393.7 439h3.3v3h-3.3zM1420.1 439h3.3v3h-3.3zM1350.8 442h3.3v3h-3.3zM1360.7 452h3.3v3h-3.3zM1364.0 452h3.3v3h-3.3zM1370.6 452h3.3v3h-3.3zM1393.7 452h3.3v3h-3.3zM1397.0 452h3.3v3h-3.3zM1413.5 452h3.3v3h-3.3zM1420.1 452h3.3v3h-3.3zM1439.9 452h3.3v3h-3.3zM1344.2 455h3.3v3h-3.3zM1423.4 455h3.3v3h-3.3zM1426.7 455h3.3v3h-3.3zM1285.2 439h3.3v3h-3.3zM1331.0 483h3.3v3h-3.3zM1347.5 483h3.3v3h-3.3zM1350.8 483h3.3v3h-3.3zM1370.6 483h3.3v3h-3.3zM1373.9 483h3.3v3h-3.3zM1387.1 483h3.3v3h-3.3zM1397.0 483h3.3v3h-3.3zM1416.8 483h3.3v3h-3.3zM1420.1 483h3.3v3h-3.3zM1380.5 486h3.3v3h-3.3zM1344.2 496h3.3v3h-3.3zM1354.1 496h3.3v3h-3.3zM1370.6 496h3.3v3h-3.3zM1420.1 496h3.3v3h-3.3zM1426.7 496h3.3v3h-3.3zM1430.0 496h3.3v3h-3.3zM1436.6 496h3.3v3h-3.3zM1397.0 499h3.3v3h-3.3zM1285.2 483h3.3v3h-3.3zM1308.3 483h3.3v3h-3.3zM1311.6 483h3.3v3h-3.3zM1298.4 486h3.3v3h-3.3zM1290.3 499h3.3v3h-3.3zM1406.9 528h3.3v3h-3.3zM1337.6 531h3.3v3h-3.3zM1344.2 541h3.3v3h-3.3zM1347.5 541h3.3v3h-3.3zM1350.8 541h3.3v3h-3.3zM1380.5 541h3.3v3h-3.3zM1393.7 541h3.3v3h-3.3zM1410.2 541h3.3v3h-3.3zM1416.8 541h3.3v3h-3.3zM1383.8 544h3.3v3h-3.3zM1406.9 544h3.3v3h-3.3zM1436.6 544h3.3v3h-3.3zM1278.6 528h3.3v3h-3.3zM1305.0 528h3.3v3h-3.3z"/><path fill="rgb(200,200,203)" d="M1331.0 306h3.3v3h-3.3zM1337.6 306h3.3v3h-3.3zM1347.5 306h3.3v3h-3.3zM1354.1 306h3.3v3h-3.3zM1367.3 306h3.3v3h-3.3zM1387.1 306h3.3v3h-3.3zM1400.3 306h3.3v3h-3.3zM1403.6 306h3.3v3h-3.3zM1413.5 306h3.3v3h-3.3zM1373.9 312h3.3v3h-3.3zM1390.4 312h3.3v3h-3.3zM1397.0 312h3.3v3h-3.3zM1413.5 312h3.3v3h-3.3zM1416.8 312h3.3v3h-3.3zM1426.7 312h3.3v3h-3.3zM1360.7 319h3.3v3h-3.3zM1390.4 319h3.3v3h-3.3zM1397.0 319h3.3v3h-3.3zM1416.8 319h3.3v3h-3.3zM1436.6 319h3.3v3h-3.3zM1344.2 325h3.3v3h-3.3zM1360.7 325h3.3v3h-3.3zM1373.9 325h3.3v3h-3.3zM1387.1 325h3.3v3h-3.3zM1390.4 325h3.3v3h-3.3zM1393.7 325h3.3v3h-3.3zM1400.3 325h3.3v3h-3.3zM1416.8 325h3.3v3h-3.3zM1278.3 312h3.3v3h-3.3zM1284.9 312h3.3v3h-3.3zM1298.1 312h3.3v3h-3.3zM1278.3 318h3.3v3h-3.3zM1331.0 350h3.3v3h-3.3zM1364.0 350h3.3v3h-3.3zM1367.3 350h3.3v3h-3.3zM1373.9 350h3.3v3h-3.3zM1393.7 350h3.3v3h-3.3zM1334.3 356h3.3v3h-3.3zM1340.9 356h3.3v3h-3.3zM1367.3 356h3.3v3h-3.3zM1370.6 356h3.3v3h-3.3zM1373.9 356h3.3v3h-3.3zM1387.1 356h3.3v3h-3.3zM1331.0 363h3.3v3h-3.3zM1344.2 363h3.3v3h-3.3zM1354.1 363h3.3v3h-3.3zM1370.6 363h3.3v3h-3.3zM1377.2 363h3.3v3h-3.3zM1416.8 363h3.3v3h-3.3zM1370.6 369h3.3v3h-3.3zM1406.9 369h3.3v3h-3.3zM1410.2 369h3.3v3h-3.3zM1426.7 369h3.3v3h-3.3zM1433.3 369h3.3v3h-3.3zM1275.3 350h3.3v3h-3.3zM1272.0 356h3.3v3h-3.3zM1331.0 394h3.3v3h-3.3zM1344.2 394h3.3v3h-3.3zM1364.0 394h3.3v3h-3.3zM1380.5 394h3.3v3h-3.3zM1406.9 394h3.3v3h-3.3zM1337.6 400h3.3v3h-3.3zM1340.9 400h3.3v3h-3.3zM1357.4 400h3.3v3h-3.3zM1360.7 400h3.3v3h-3.3zM1380.5 400h3.3v3h-3.3zM1390.4 400h3.3v3h-3.3zM1397.0 400h3.3v3h-3.3zM1400.3 400h3.3v3h-3.3zM1406.9 400h3.3v3h-3.3zM1413.5 400h3.3v3h-3.3zM1416.8 400h3.3v3h-3.3zM1420.1 400h3.3v3h-3.3zM1340.9 407h3.3v3h-3.3zM1357.4 407h3.3v3h-3.3zM1387.1 407h3.3v3h-3.3zM1413.5 407h3.3v3h-3.3zM1433.3 407h3.3v3h-3.3zM1334.3 413h3.3v3h-3.3zM1344.2 413h3.3v3h-3.3zM1354.1 413h3.3v3h-3.3zM1357.4 413h3.3v3h-3.3zM1360.7 413h3.3v3h-3.3zM1416.8 413h3.3v3h-3.3zM1285.2 394h3.3v3h-3.3zM1295.1 394h3.3v3h-3.3zM1301.7 394h3.3v3h-3.3zM1311.6 394h3.3v3h-3.3zM1285.2 400h3.3v3h-3.3zM1305.0 400h3.3v3h-3.3zM1287.0 407h3.3v3h-3.3zM1296.9 407h3.3v3h-3.3zM1377.2 439h3.3v3h-3.3zM1383.8 439h3.3v3h-3.3zM1387.1 439h3.3v3h-3.3zM1390.4 439h3.3v3h-3.3zM1397.0 439h3.3v3h-3.3zM1340.9 445h3.3v3h-3.3zM1360.7 445h3.3v3h-3.3zM1377.2 445h3.3v3h-3.3zM1390.4 445h3.3v3h-3.3zM1426.7 445h3.3v3h-3.3zM1354.1 452h3.3v3h-3.3zM1380.5 452h3.3v3h-3.3zM1403.6 452h3.3v3h-3.3zM1331.0 458h3.3v3h-3.3zM1350.8 458h3.3v3h-3.3zM1364.0 458h3.3v3h-3.3zM1377.2 458h3.3v3h-3.3zM1406.9 458h3.3v3h-3.3zM1413.5 458h3.3v3h-3.3zM1436.6 458h3.3v3h-3.3zM1305.0 439h3.3v3h-3.3zM1281.9 445h3.3v3h-3.3zM1285.2 445h3.3v3h-3.3zM1340.9 483h3.3v3h-3.3zM1400.3 483h3.3v3h-3.3zM1413.5 483h3.3v3h-3.3zM1426.7 483h3.3v3h-3.3zM1350.8 489h3.3v3h-3.3zM1364.0 489h3.3v3h-3.3zM1367.3 489h3.3v3h-3.3zM1373.9 489h3.3v3h-3.3zM1377.2 489h3.3v3h-3.3zM1403.6 489h3.3v3h-3.3zM1416.8 489h3.3v3h-3.3zM1420.1 489h3.3v3h-3.3zM1423.4 489h3.3v3h-3.3zM1331.0 496h3.3v3h-3.3zM1337.6 496h3.3v3h-3.3zM1380.5 496h3.3v3h-3.3zM1410.2 496h3.3v3h-3.3zM1413.5 496h3.3v3h-3.3zM1416.8 496h3.3v3h-3.3zM1334.3 502h3.3v3h-3.3zM1410.2 502h3.3v3h-3.3zM1420.1 502h3.3v3h-3.3zM1436.6 502h3.3v3h-3.3zM1439.9 502h3.3v3h-3.3zM1288.5 489h3.3v3h-3.3zM1291.8 489h3.3v3h-3.3zM1298.4 489h3.3v3h-3.3zM1308.3 489h3.3v3h-3.3zM1293.6 502h3.3v3h-3.3zM1393.7 528h3.3v3h-3.3zM1397.0 528h3.3v3h-3.3zM1423.4 528h3.3v3h-3.3zM1337.6 534h3.3v3h-3.3zM1340.9 534h3.3v3h-3.3zM1344.2 534h3.3v3h-3.3zM1350.8 534h3.3v3h-3.3zM1383.8 534h3.3v3h-3.3zM1403.6 534h3.3v3h-3.3zM1410.2 534h3.3v3h-3.3zM1413.5 534h3.3v3h-3.3zM1420.1 534h3.3v3h-3.3zM1426.7 534h3.3v3h-3.3zM1360.7 541h3.3v3h-3.3zM1364.0 541h3.3v3h-3.3zM1367.3 541h3.3v3h-3.3zM1377.2 541h3.3v3h-3.3zM1426.7 541h3.3v3h-3.3zM1337.6 547h3.3v3h-3.3zM1340.9 547h3.3v3h-3.3zM1397.0 547h3.3v3h-3.3zM1423.4 547h3.3v3h-3.3zM1439.9 547h3.3v3h-3.3zM1275.3 528h3.3v3h-3.3zM1295.1 528h3.3v3h-3.3zM1301.7 528h3.3v3h-3.3zM1305.0 534h3.3v3h-3.3zM1290.3 541h3.3v3h-3.3z"/><path fill="rgb(210,210,213)" d="M1360.7 306h3.3v3h-3.3zM1364.0 306h3.3v3h-3.3zM1370.6 306h3.3v3h-3.3zM1393.7 306h3.3v3h-3.3zM1331.0 312h3.3v3h-3.3zM1334.3 312h3.3v3h-3.3zM1340.9 312h3.3v3h-3.3zM1347.5 312h3.3v3h-3.3zM1360.7 312h3.3v3h-3.3zM1383.8 312h3.3v3h-3.3zM1387.1 312h3.3v3h-3.3zM1354.1 319h3.3v3h-3.3zM1413.5 319h3.3v3h-3.3zM1433.3 319h3.3v3h-3.3zM1331.0 325h3.3v3h-3.3zM1367.3 325h3.3v3h-3.3zM1383.8 325h3.3v3h-3.3zM1423.4 325h3.3v3h-3.3zM1281.6 312h3.3v3h-3.3zM1301.4 312h3.3v3h-3.3zM1275.0 318h3.3v3h-3.3zM1288.2 318h3.3v3h-3.3zM1301.4 318h3.3v3h-3.3zM1380.5 350h3.3v3h-3.3zM1390.4 350h3.3v3h-3.3zM1406.9 350h3.3v3h-3.3zM1410.2 350h3.3v3h-3.3zM1344.2 356h3.3v3h-3.3zM1354.1 356h3.3v3h-3.3zM1377.2 356h3.3v3h-3.3zM1380.5 356h3.3v3h-3.3zM1397.0 356h3.3v3h-3.3zM1400.3 356h3.3v3h-3.3zM1403.6 356h3.3v3h-3.3zM1406.9 356h3.3v3h-3.3zM1413.5 356h3.3v3h-3.3zM1373.9 363h3.3v3h-3.3zM1406.9 363h3.3v3h-3.3zM1439.9 363h3.3v3h-3.3zM1334.3 369h3.3v3h-3.3zM1350.8 369h3.3v3h-3.3zM1354.1 369h3.3v3h-3.3zM1360.7 369h3.3v3h-3.3zM1367.3 369h3.3v3h-3.3zM1373.9 369h3.3v3h-3.3zM1387.1 369h3.3v3h-3.3zM1436.6 369h3.3v3h-3.3zM1298.4 350h3.3v3h-3.3zM1311.6 350h3.3v3h-3.3zM1275.3 356h3.3v3h-3.3zM1288.5 356h3.3v3h-3.3zM1290.3 363h3.3v3h-3.3zM1293.6 369h3.3v3h-3.3zM1337.6 394h3.3v3h-3.3zM1340.9 394h3.3v3h-3.3zM1350.8 394h3.3v3h-3.3zM1373.9 394h3.3v3h-3.3zM1377.2 394h3.3v3h-3.3zM1387.1 394h3.3v3h-3.3zM1416.8 394h3.3v3h-3.3zM1426.7 394h3.3v3h-3.3zM1350.8 400h3.3v3h-3.3zM1370.6 400h3.3v3h-3.3zM1403.6 400h3.3v3h-3.3zM1331.0 407h3.3v3h-3.3zM1334.3 407h3.3v3h-3.3zM1367.3 407h3.3v3h-3.3zM1400.3 407h3.3v3h-3.3zM1410.2 407h3.3v3h-3.3zM1420.1 407h3.3v3h-3.3zM1423.4 407h3.3v3h-3.3zM1337.6 413h3.3v3h-3.3zM1347.5 413h3.3v3h-3.3zM1350.8 413h3.3v3h-3.3zM1397.0 413h3.3v3h-3.3zM1403.6 413h3.3v3h-3.3zM1420.1 413h3.3v3h-3.3zM1430.0 413h3.3v3h-3.3zM1272.0 400h3.3v3h-3.3zM1281.9 400h3.3v3h-3.3zM1295.1 400h3.3v3h-3.3zM1301.7 400h3.3v3h-3.3zM1293.6 413h3.3v3h-3.3zM1370.6 439h3.3v3h-3.3zM1331.0 445h3.3v3h-3.3zM1364.0 445h3.3v3h-3.3zM1367.3 445h3.3v3h-3.3zM1370.6 445h3.3v3h-3.3zM1397.0 445h3.3v3h-3.3zM1400.3 445h3.3v3h-3.3zM1403.6 445h3.3v3h-3.3zM1420.1 445h3.3v3h-3.3zM1423.4 445h3.3v3h-3.3zM1367.3 452h3.3v3h-3.3zM1416.8 452h3.3v3h-3.3zM1337.6 458h3.3v3h-3.3zM1354.1 458h3.3v3h-3.3zM1400.3 458h3.3v3h-3.3zM1403.6 458h3.3v3h-3.3zM1410.2 458h3.3v3h-3.3zM1295.1 439h3.3v3h-3.3zM1301.7 439h3.3v3h-3.3zM1308.3 439h3.3v3h-3.3zM1311.6 439h3.3v3h-3.3zM1301.7 445h3.3v3h-3.3zM1296.9 458h3.3v3h-3.3zM1337.6 483h3.3v3h-3.3zM1380.5 483h3.3v3h-3.3zM1393.7 483h3.3v3h-3.3zM1344.2 489h3.3v3h-3.3zM1383.8 489h3.3v3h-3.3zM1387.1 489h3.3v3h-3.3zM1393.7 489h3.3v3h-3.3zM1397.0 489h3.3v3h-3.3zM1360.7 496h3.3v3h-3.3zM1364.0 496h3.3v3h-3.3zM1373.9 496h3.3v3h-3.3zM1383.8 496h3.3v3h-3.3zM1397.0 496h3.3v3h-3.3zM1433.3 496h3.3v3h-3.3zM1331.0 502h3.3v3h-3.3zM1350.8 502h3.3v3h-3.3zM1383.8 502h3.3v3h-3.3zM1390.4 502h3.3v3h-3.3zM1393.7 502h3.3v3h-3.3zM1397.0 502h3.3v3h-3.3zM1295.1 483h3.3v3h-3.3zM1287.0 496h3.3v3h-3.3zM1296.9 496h3.3v3h-3.3zM1296.9 502h3.3v3h-3.3zM1350.8 528h3.3v3h-3.3zM1354.1 528h3.3v3h-3.3zM1377.2 528h3.3v3h-3.3zM1410.2 528h3.3v3h-3.3zM1416.8 528h3.3v3h-3.3zM1420.1 528h3.3v3h-3.3zM1331.0 534h3.3v3h-3.3zM1354.1 534h3.3v3h-3.3zM1357.4 534h3.3v3h-3.3zM1397.0 534h3.3v3h-3.3zM1416.8 534h3.3v3h-3.3zM1357.4 541h3.3v3h-3.3zM1370.6 541h3.3v3h-3.3zM1373.9 541h3.3v3h-3.3zM1387.1 541h3.3v3h-3.3zM1413.5 541h3.3v3h-3.3zM1344.2 547h3.3v3h-3.3zM1370.6 547h3.3v3h-3.3zM1383.8 547h3.3v3h-3.3zM1390.4 547h3.3v3h-3.3zM1393.7 547h3.3v3h-3.3zM1413.5 547h3.3v3h-3.3zM1426.7 547h3.3v3h-3.3zM1430.0 547h3.3v3h-3.3zM1288.5 528h3.3v3h-3.3zM1308.3 528h3.3v3h-3.3zM1308.3 534h3.3v3h-3.3zM1287.0 541h3.3v3h-3.3zM1293.6 541h3.3v3h-3.3zM1296.9 541h3.3v3h-3.3zM1290.3 547h3.3v3h-3.3zM1293.6 547h3.3v3h-3.3zM1296.9 547h3.3v3h-3.3z"/><path fill="rgb(220,220,223)" d="M1334.3 306h3.3v3h-3.3zM1340.9 306h3.3v3h-3.3zM1350.8 306h3.3v3h-3.3zM1383.8 306h3.3v3h-3.3zM1423.4 306h3.3v3h-3.3zM1393.7 309h3.3v3h-3.3zM1406.9 309h3.3v3h-3.3zM1350.8 312h3.3v3h-3.3zM1354.1 312h3.3v3h-3.3zM1364.0 312h3.3v3h-3.3zM1393.7 312h3.3v3h-3.3zM1400.3 312h3.3v3h-3.3zM1403.6 312h3.3v3h-3.3zM1406.9 312h3.3v3h-3.3zM1420.1 312h3.3v3h-3.3zM1331.0 319h3.3v3h-3.3zM1344.2 319h3.3v3h-3.3zM1377.2 319h3.3v3h-3.3zM1383.8 319h3.3v3h-3.3zM1387.1 319h3.3v3h-3.3zM1393.7 319h3.3v3h-3.3zM1430.0 319h3.3v3h-3.3zM1393.7 322h3.3v3h-3.3zM1410.2 322h3.3v3h-3.3zM1337.6 325h3.3v3h-3.3zM1340.9 325h3.3v3h-3.3zM1354.1 325h3.3v3h-3.3zM1364.0 325h3.3v3h-3.3zM1370.6 325h3.3v3h-3.3zM1397.0 325h3.3v3h-3.3zM1410.2 325h3.3v3h-3.3zM1420.1 325h3.3v3h-3.3zM1436.6 325h3.3v3h-3.3zM1275.0 312h3.3v3h-3.3zM1301.4 315h3.3v3h-3.3zM1294.8 318h3.3v3h-3.3zM1334.3 350h3.3v3h-3.3zM1337.6 350h3.3v3h-3.3zM1370.6 350h3.3v3h-3.3zM1383.8 350h3.3v3h-3.3zM1397.0 350h3.3v3h-3.3zM1423.4 350h3.3v3h-3.3zM1331.0 353h3.3v3h-3.3zM1357.4 356h3.3v3h-3.3zM1337.6 363h3.3v3h-3.3zM1340.9 363h3.3v3h-3.3zM1347.5 363h3.3v3h-3.3zM1380.5 363h3.3v3h-3.3zM1387.1 363h3.3v3h-3.3zM1393.7 363h3.3v3h-3.3zM1397.0 363h3.3v3h-3.3zM1403.6 363h3.3v3h-3.3zM1430.0 363h3.3v3h-3.3zM1436.6 363h3.3v3h-3.3zM1331.0 369h3.3v3h-3.3zM1337.6 369h3.3v3h-3.3zM1383.8 369h3.3v3h-3.3zM1393.7 369h3.3v3h-3.3zM1397.0 369h3.3v3h-3.3zM1400.3 369h3.3v3h-3.3zM1413.5 369h3.3v3h-3.3zM1416.8 369h3.3v3h-3.3zM1420.1 369h3.3v3h-3.3zM1430.0 369h3.3v3h-3.3zM1439.9 369h3.3v3h-3.3zM1295.1 350h3.3v3h-3.3zM1301.7 350h3.3v3h-3.3zM1281.9 356h3.3v3h-3.3zM1285.2 356h3.3v3h-3.3zM1291.8 356h3.3v3h-3.3zM1305.0 356h3.3v3h-3.3zM1293.6 363h3.3v3h-3.3zM1296.9 363h3.3v3h-3.3zM1347.5 394h3.3v3h-3.3zM1357.4 394h3.3v3h-3.3zM1367.3 394h3.3v3h-3.3zM1370.6 394h3.3v3h-3.3zM1403.6 394h3.3v3h-3.3zM1331.0 400h3.3v3h-3.3zM1334.3 400h3.3v3h-3.3zM1354.1 400h3.3v3h-3.3zM1364.0 400h3.3v3h-3.3zM1383.8 400h3.3v3h-3.3zM1393.7 400h3.3v3h-3.3zM1337.6 407h3.3v3h-3.3zM1344.2 407h3.3v3h-3.3zM1347.5 407h3.3v3h-3.3zM1370.6 407h3.3v3h-3.3zM1383.8 407h3.3v3h-3.3zM1406.9 407h3.3v3h-3.3zM1416.8 407h3.3v3h-3.3zM1439.9 407h3.3v3h-3.3zM1344.2 410h3.3v3h-3.3zM1331.0 413h3.3v3h-3.3zM1340.9 413h3.3v3h-3.3zM1367.3 413h3.3v3h-3.3zM1373.9 413h3.3v3h-3.3zM1426.7 413h3.3v3h-3.3zM1281.9 394h3.3v3h-3.3zM1288.5 394h3.3v3h-3.3zM1305.0 394h3.3v3h-3.3zM1275.3 400h3.3v3h-3.3zM1298.4 400h3.3v3h-3.3zM1308.3 400h3.3v3h-3.3zM1293.6 407h3.3v3h-3.3zM1287.0 413h3.3v3h-3.3zM1331.0 439h3.3v3h-3.3zM1340.9 439h3.3v3h-3.3zM1344.2 439h3.3v3h-3.3zM1347.5 439h3.3v3h-3.3zM1354.1 439h3.3v3h-3.3zM1364.0 439h3.3v3h-3.3zM1403.6 439h3.3v3h-3.3zM1406.9 439h3.3v3h-3.3zM1423.4 439h3.3v3h-3.3zM1426.7 439h3.3v3h-3.3zM1337.6 445h3.3v3h-3.3zM1344.2 445h3.3v3h-3.3zM1347.5 445h3.3v3h-3.3zM1350.8 445h3.3v3h-3.3zM1387.1 445h3.3v3h-3.3zM1393.7 445h3.3v3h-3.3zM1413.5 445h3.3v3h-3.3zM1334.3 452h3.3v3h-3.3zM1337.6 452h3.3v3h-3.3zM1340.9 452h3.3v3h-3.3zM1357.4 452h3.3v3h-3.3zM1377.2 452h3.3v3h-3.3zM1387.1 452h3.3v3h-3.3zM1406.9 452h3.3v3h-3.3zM1433.3 452h3.3v3h-3.3zM1436.6 452h3.3v3h-3.3zM1390.4 455h3.3v3h-3.3zM1334.3 458h3.3v3h-3.3zM1370.6 458h3.3v3h-3.3zM1380.5 458h3.3v3h-3.3zM1387.1 458h3.3v3h-3.3zM1390.4 458h3.3v3h-3.3zM1397.0 458h3.3v3h-3.3zM1416.8 458h3.3v3h-3.3zM1423.4 458h3.3v3h-3.3zM1426.7 458h3.3v3h-3.3zM1439.9 458h3.3v3h-3.3zM1275.3 439h3.3v3h-3.3zM1288.5 439h3.3v3h-3.3zM1288.5 442h3.3v3h-3.3zM1275.3 445h3.3v3h-3.3zM1288.5 445h3.3v3h-3.3zM1291.8 445h3.3v3h-3.3zM1295.1 445h3.3v3h-3.3zM1308.3 445h3.3v3h-3.3zM1287.0 455h3.3v3h-3.3zM1334.3 483h3.3v3h-3.3zM1344.2 483h3.3v3h-3.3zM1383.8 483h3.3v3h-3.3zM1410.2 483h3.3v3h-3.3zM1331.0 489h3.3v3h-3.3zM1390.4 489h3.3v3h-3.3zM1400.3 489h3.3v3h-3.3zM1413.5 489h3.3v3h-3.3zM1426.7 489h3.3v3h-3.3zM1340.9 496h3.3v3h-3.3zM1390.4 496h3.3v3h-3.3zM1400.3 496h3.3v3h-3.3zM1439.9 496h3.3v3h-3.3zM1337.6 499h3.3v3h-3.3zM1337.6 502h3.3v3h-3.3zM1344.2 502h3.3v3h-3.3zM1354.1 502h3.3v3h-3.3zM1357.4 502h3.3v3h-3.3zM1360.7 502h3.3v3h-3.3zM1367.3 502h3.3v3h-3.3zM1370.6 502h3.3v3h-3.3zM1377.2 502h3.3v3h-3.3zM1387.1 502h3.3v3h-3.3zM1403.6 502h3.3v3h-3.3zM1406.9 502h3.3v3h-3.3zM1423.4 502h3.3v3h-3.3zM1433.3 502h3.3v3h-3.3zM1275.3 483h3.3v3h-3.3zM1291.8 483h3.3v3h-3.3zM1298.4 483h3.3v3h-3.3zM1272.0 489h3.3v3h-3.3zM1275.3 489h3.3v3h-3.3zM1301.7 489h3.3v3h-3.3zM1311.6 489h3.3v3h-3.3zM1290.3 496h3.3v3h-3.3zM1340.9 528h3.3v3h-3.3zM1347.5 528h3.3v3h-3.3zM1380.5 528h3.3v3h-3.3zM1383.8 528h3.3v3h-3.3zM1387.1 528h3.3v3h-3.3zM1390.4 528h3.3v3h-3.3zM1413.5 528h3.3v3h-3.3zM1377.2 531h3.3v3h-3.3zM1400.3 531h3.3v3h-3.3zM1334.3 534h3.3v3h-3.3zM1347.5 534h3.3v3h-3.3zM1364.0 534h3.3v3h-3.3zM1380.5 534h3.3v3h-3.3zM1340.9 541h3.3v3h-3.3zM1383.8 541h3.3v3h-3.3zM1406.9 541h3.3v3h-3.3zM1420.1 541h3.3v3h-3.3zM1340.9 544h3.3v3h-3.3zM1331.0 547h3.3v3h-3.3zM1350.8 547h3.3v3h-3.3zM1373.9 547h3.3v3h-3.3zM1377.2 547h3.3v3h-3.3zM1400.3 547h3.3v3h-3.3zM1403.6 547h3.3v3h-3.3zM1416.8 547h3.3v3h-3.3zM1436.6 547h3.3v3h-3.3zM1272.0 528h3.3v3h-3.3zM1298.4 528h3.3v3h-3.3zM1272.0 534h3.3v3h-3.3zM1275.3 534h3.3v3h-3.3zM1278.6 534h3.3v3h-3.3zM1288.5 534h3.3v3h-3.3zM1295.1 534h3.3v3h-3.3zM1301.7 534h3.3v3h-3.3z"/><path fill="rgb(230,230,233)" d="M1377.2 306h3.3v3h-3.3zM1406.9 306h3.3v3h-3.3zM1357.4 309h3.3v3h-3.3zM1373.9 309h3.3v3h-3.3zM1413.5 309h3.3v3h-3.3zM1337.6 312h3.3v3h-3.3zM1367.3 312h3.3v3h-3.3zM1370.6 312h3.3v3h-3.3zM1377.2 312h3.3v3h-3.3zM1380.5 312h3.3v3h-3.3zM1410.2 312h3.3v3h-3.3zM1347.5 325h3.3v3h-3.3zM1350.8 325h3.3v3h-3.3zM1377.2 325h3.3v3h-3.3zM1380.5 325h3.3v3h-3.3zM1403.6 325h3.3v3h-3.3zM1406.9 325h3.3v3h-3.3zM1413.5 325h3.3v3h-3.3zM1426.7 325h3.3v3h-3.3zM1430.0 325h3.3v3h-3.3zM1433.3 325h3.3v3h-3.3zM1439.9 325h3.3v3h-3.3zM1288.2 312h3.3v3h-3.3zM1294.8 315h3.3v3h-3.3zM1304.7 315h3.3v3h-3.3zM1281.6 318h3.3v3h-3.3zM1284.9 318h3.3v3h-3.3zM1298.1 318h3.3v3h-3.3zM1304.7 318h3.3v3h-3.3zM1308.0 318h3.3v3h-3.3zM1377.2 350h3.3v3h-3.3zM1406.9 353h3.3v3h-3.3zM1416.8 353h3.3v3h-3.3zM1331.0 356h3.3v3h-3.3zM1347.5 356h3.3v3h-3.3zM1350.8 356h3.3v3h-3.3zM1360.7 356h3.3v3h-3.3zM1364.0 356h3.3v3h-3.3zM1383.8 356h3.3v3h-3.3zM1390.4 356h3.3v3h-3.3zM1393.7 356h3.3v3h-3.3zM1420.1 356h3.3v3h-3.3zM1426.7 356h3.3v3h-3.3zM1390.4 363h3.3v3h-3.3zM1397.0 366h3.3v3h-3.3zM1400.3 366h3.3v3h-3.3zM1340.9 369h3.3v3h-3.3zM1344.2 369h3.3v3h-3.3zM1347.5 369h3.3v3h-3.3zM1357.4 369h3.3v3h-3.3zM1390.4 369h3.3v3h-3.3zM1403.6 369h3.3v3h-3.3zM1423.4 369h3.3v3h-3.3zM1278.6 356h3.3v3h-3.3zM1295.1 356h3.3v3h-3.3zM1298.4 356h3.3v3h-3.3zM1308.3 356h3.3v3h-3.3zM1311.6 356h3.3v3h-3.3zM1287.0 369h3.3v3h-3.3zM1290.3 369h3.3v3h-3.3zM1296.9 369h3.3v3h-3.3zM1354.1 394h3.3v3h-3.3zM1380.5 397h3.3v3h-3.3zM1344.2 400h3.3v3h-3.3zM1347.5 400h3.3v3h-3.3zM1367.3 400h3.3v3h-3.3zM1373.9 400h3.3v3h-3.3zM1377.2 400h3.3v3h-3.3zM1410.2 400h3.3v3h-3.3zM1423.4 400h3.3v3h-3.3zM1426.7 400h3.3v3h-3.3zM1436.6 407h3.3v3h-3.3zM1364.0 413h3.3v3h-3.3zM1370.6 413h3.3v3h-3.3zM1377.2 413h3.3v3h-3.3zM1380.5 413h3.3v3h-3.3zM1387.1 413h3.3v3h-3.3zM1390.4 413h3.3v3h-3.3zM1393.7 413h3.3v3h-3.3zM1400.3 413h3.3v3h-3.3zM1406.9 413h3.3v3h-3.3zM1410.2 413h3.3v3h-3.3zM1433.3 413h3.3v3h-3.3zM1436.6 413h3.3v3h-3.3zM1439.9 413h3.3v3h-3.3zM1308.3 394h3.3v3h-3.3zM1288.5 397h3.3v3h-3.3zM1308.3 397h3.3v3h-3.3zM1278.6 400h3.3v3h-3.3zM1288.5 400h3.3v3h-3.3zM1291.8 400h3.3v3h-3.3zM1311.6 400h3.3v3h-3.3zM1290.3 413h3.3v3h-3.3zM1296.9 413h3.3v3h-3.3zM1367.3 439h3.3v3h-3.3zM1413.5 439h3.3v3h-3.3zM1410.2 442h3.3v3h-3.3zM1354.1 445h3.3v3h-3.3zM1357.4 445h3.3v3h-3.3zM1373.9 445h3.3v3h-3.3zM1380.5 445h3.3v3h-3.3zM1406.9 445h3.3v3h-3.3zM1410.2 445h3.3v3h-3.3zM1416.8 445h3.3v3h-3.3zM1347.5 452h3.3v3h-3.3zM1350.8 452h3.3v3h-3.3zM1383.8 455h3.3v3h-3.3zM1340.9 458h3.3v3h-3.3zM1344.2 458h3.3v3h-3.3zM1347.5 458h3.3v3h-3.3zM1357.4 458h3.3v3h-3.3zM1360.7 458h3.3v3h-3.3zM1367.3 458h3.3v3h-3.3zM1383.8 458h3.3v3h-3.3zM1420.1 458h3.3v3h-3.3zM1430.0 458h3.3v3h-3.3zM1272.0 445h3.3v3h-3.3zM1278.6 445h3.3v3h-3.3zM1298.4 445h3.3v3h-3.3zM1311.6 445h3.3v3h-3.3zM1287.0 458h3.3v3h-3.3zM1290.3 458h3.3v3h-3.3zM1364.0 483h3.3v3h-3.3zM1354.1 486h3.3v3h-3.3zM1373.9 486h3.3v3h-3.3zM1400.3 486h3.3v3h-3.3zM1334.3 489h3.3v3h-3.3zM1340.9 489h3.3v3h-3.3zM1347.5 489h3.3v3h-3.3zM1354.1 489h3.3v3h-3.3zM1357.4 489h3.3v3h-3.3zM1360.7 489h3.3v3h-3.3zM1370.6 489h3.3v3h-3.3zM1380.5 489h3.3v3h-3.3zM1406.9 489h3.3v3h-3.3zM1410.2 489h3.3v3h-3.3zM1334.3 496h3.3v3h-3.3zM1350.8 496h3.3v3h-3.3zM1387.1 496h3.3v3h-3.3zM1357.4 499h3.3v3h-3.3zM1430.0 499h3.3v3h-3.3zM1340.9 502h3.3v3h-3.3zM1364.0 502h3.3v3h-3.3zM1373.9 502h3.3v3h-3.3zM1380.5 502h3.3v3h-3.3zM1400.3 502h3.3v3h-3.3zM1413.5 502h3.3v3h-3.3zM1416.8 502h3.3v3h-3.3zM1426.7 502h3.3v3h-3.3zM1430.0 502h3.3v3h-3.3zM1281.9 489h3.3v3h-3.3zM1287.0 502h3.3v3h-3.3zM1337.6 528h3.3v3h-3.3zM1364.0 528h3.3v3h-3.3zM1367.3 528h3.3v3h-3.3zM1410.2 531h3.3v3h-3.3zM1360.7 534h3.3v3h-3.3zM1367.3 534h3.3v3h-3.3zM1370.6 534h3.3v3h-3.3zM1373.9 534h3.3v3h-3.3zM1377.2 534h3.3v3h-3.3zM1387.1 534h3.3v3h-3.3zM1390.4 534h3.3v3h-3.3zM1393.7 534h3.3v3h-3.3zM1400.3 534h3.3v3h-3.3zM1406.9 534h3.3v3h-3.3zM1423.4 534h3.3v3h-3.3zM1423.4 541h3.3v3h-3.3zM1436.6 541h3.3v3h-3.3zM1337.6 544h3.3v3h-3.3zM1393.7 544h3.3v3h-3.3zM1426.7 544h3.3v3h-3.3zM1334.3 547h3.3v3h-3.3zM1347.5 547h3.3v3h-3.3zM1354.1 547h3.3v3h-3.3zM1357.4 547h3.3v3h-3.3zM1367.3 547h3.3v3h-3.3zM1380.5 547h3.3v3h-3.3zM1406.9 547h3.3v3h-3.3zM1410.2 547h3.3v3h-3.3zM1420.1 547h3.3v3h-3.3zM1433.3 547h3.3v3h-3.3zM1291.8 528h3.3v3h-3.3zM1285.2 531h3.3v3h-3.3zM1281.9 534h3.3v3h-3.3zM1285.2 534h3.3v3h-3.3zM1298.4 534h3.3v3h-3.3zM1311.6 534h3.3v3h-3.3zM1293.6 544h3.3v3h-3.3zM1287.0 547h3.3v3h-3.3z"/><path fill="rgb(240,240,243)" d="M1373.9 306h3.3v3h-3.3zM1344.2 312h3.3v3h-3.3zM1357.4 312h3.3v3h-3.3zM1423.4 312h3.3v3h-3.3zM1367.3 319h3.3v3h-3.3zM1334.3 325h3.3v3h-3.3zM1291.5 318h3.3v3h-3.3zM1403.6 350h3.3v3h-3.3zM1344.2 353h3.3v3h-3.3zM1426.7 353h3.3v3h-3.3zM1337.6 356h3.3v3h-3.3zM1410.2 356h3.3v3h-3.3zM1416.8 356h3.3v3h-3.3zM1423.4 356h3.3v3h-3.3zM1350.8 363h3.3v3h-3.3zM1364.0 369h3.3v3h-3.3zM1377.2 369h3.3v3h-3.3zM1380.5 369h3.3v3h-3.3zM1285.2 350h3.3v3h-3.3zM1301.7 356h3.3v3h-3.3zM1410.2 394h3.3v3h-3.3zM1387.1 400h3.3v3h-3.3zM1350.8 407h3.3v3h-3.3zM1383.8 413h3.3v3h-3.3zM1413.5 413h3.3v3h-3.3zM1423.4 413h3.3v3h-3.3zM1331.0 442h3.3v3h-3.3zM1354.1 442h3.3v3h-3.3zM1400.3 442h3.3v3h-3.3zM1426.7 442h3.3v3h-3.3zM1334.3 445h3.3v3h-3.3zM1383.8 445h3.3v3h-3.3zM1423.4 452h3.3v3h-3.3zM1373.9 458h3.3v3h-3.3zM1393.7 458h3.3v3h-3.3zM1433.3 458h3.3v3h-3.3zM1298.4 439h3.3v3h-3.3zM1305.0 445h3.3v3h-3.3zM1290.3 452h3.3v3h-3.3zM1293.6 458h3.3v3h-3.3zM1367.3 486h3.3v3h-3.3zM1337.6 489h3.3v3h-3.3zM1423.4 496h3.3v3h-3.3zM1370.6 499h3.3v3h-3.3zM1373.9 499h3.3v3h-3.3zM1347.5 502h3.3v3h-3.3zM1278.6 489h3.3v3h-3.3zM1285.2 489h3.3v3h-3.3zM1295.1 489h3.3v3h-3.3zM1305.0 489h3.3v3h-3.3zM1293.6 496h3.3v3h-3.3zM1290.3 502h3.3v3h-3.3zM1344.2 528h3.3v3h-3.3zM1357.4 528h3.3v3h-3.3zM1370.6 531h3.3v3h-3.3zM1403.6 541h3.3v3h-3.3zM1439.9 541h3.3v3h-3.3zM1367.3 544h3.3v3h-3.3zM1360.7 547h3.3v3h-3.3zM1364.0 547h3.3v3h-3.3zM1387.1 547h3.3v3h-3.3zM1291.8 534h3.3v3h-3.3z"/><path fill="rgb(250,250,253)" d="M1377.2 309h3.3v3h-3.3zM1357.4 325h3.3v3h-3.3zM1426.7 407h3.3v3h-3.3zM1377.2 496h3.3v3h-3.3zM1288.5 483h3.3v3h-3.3zM1291.8 486h3.3v3h-3.3z"/></svg>
<div class="a" style="left:1196px;top:566.5px;width:778px;height:1.5px;background:#e4e6eb"></div>
<div class="a" style="left:1562px;top:583px;font-size:9px;line-height:13px;color:#606266">共 <b>409</b> 条</div>
<div class="a" style="left:1605px;top:581px;width:63px;height:17px;border:1px solid #dcdfe6;border-radius:2px"></div>
<div class="a" style="left:1618px;top:583px;font-size:9px;line-height:13px;color:#606266">10条/页</div>
<svg class="a" style="left:1656px;top:588px" width="6" height="4" viewBox="0 0 6 4" fill="none" stroke="#c0c4cc" stroke-width="0.8"><path d="M0.3 0.3L3 3.2L5.7 0.3"/></svg>
<svg class="a" style="left:1685px;top:585px" width="4" height="8" viewBox="0 0 4 8" fill="none" stroke="#c0c4cc" stroke-width="0.9"><path d="M3.6 0.4L0.5 4L3.6 7.6"/></svg>
<svg class="a" style="left:1889px;top:585px" width="4" height="8" viewBox="0 0 4 8" fill="none" stroke="#303133" stroke-width="0.9"><path d="M0.4 0.4L3.5 4L0.4 7.6"/></svg>
<div class="opn" style="left:1711.0px;color:#409eff">1</div>
<div class="opn" style="left:1733.2px">2</div>
<div class="opn" style="left:1755.5px">3</div>
<div class="opn" style="left:1777.6px">4</div>
<div class="opn" style="left:1800.0px">5</div>
<div class="opn" style="left:1822.2px">6</div>
<div class="opn" style="left:1844.7px">···</div>
<div class="opn" style="left:1867.0px">41</div>
<div class="a" style="left:1916px;top:583px;font-size:9px;line-height:13px;color:#606266">前往</div>
<div class="a" style="left:1935px;top:581px;width:28px;height:17px;border:1px solid #dcdfe6;border-radius:2px;font-size:9px;line-height:15px;text-align:center;color:#606266">1</div>
<div class="a" style="left:1966px;top:583px;font-size:9px;line-height:13px;color:#606266">页</div>
</body></html>
